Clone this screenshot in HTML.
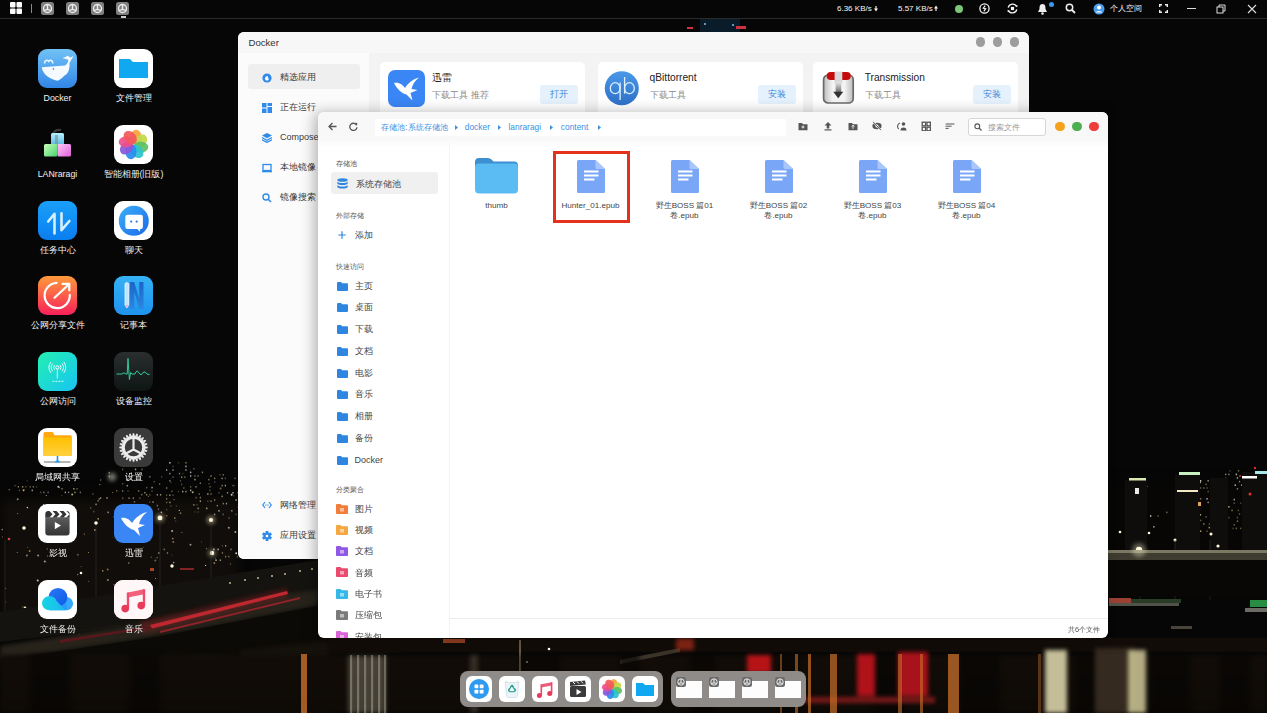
<!DOCTYPE html>
<html><head><meta charset="utf-8"><style>
*{margin:0;padding:0;box-sizing:border-box}
html,body{width:1267px;height:713px;overflow:hidden;background:#000;font-family:"Liberation Sans",sans-serif}
.abs{position:absolute}
svg{display:block}
#topbar{position:absolute;left:0;top:0;width:1267px;height:19px;background:rgba(6,6,6,0.92);border-bottom:1px solid #2a2a2a;color:#f6f6f6;font-size:8px}
.dicon{position:absolute;width:39px;height:39px;border-radius:9px;overflow:hidden}
.dicon svg{display:block}
.dlabel{position:absolute;width:100px;text-align:center;color:#f2f2f2;font-size:8.8px;line-height:10px;white-space:nowrap}
#docker{position:absolute;left:238px;top:32px;width:791px;height:527px;background:#f3f3f3;border-radius:6px;overflow:hidden}
#fm{position:absolute;left:318px;top:112px;width:790px;height:526px;background:#fff;border-radius:6px;overflow:hidden;box-shadow:-4px 0 14px rgba(0,0,0,0.28)}
.t{position:absolute;white-space:nowrap}

.dk-item{position:absolute;left:10px;width:112px;height:25px;font-size:9px;color:#3a3a3a;line-height:25px}
.dk-item .ic{position:absolute;left:14px;top:7.5px;width:10px;height:10px}
.dk-item .tx{position:absolute;left:32px;top:0}
.card{position:absolute;top:30px;width:205px;height:56px;background:#fff;border-radius:5px}
.card .nm{position:absolute;left:52px;top:10px;font-size:10.2px;color:#222;line-height:12px}
.card .sub{position:absolute;left:52px;top:28px;font-size:9px;color:#8a8a8a;line-height:11px}
.card .btn{position:absolute;left:160px;top:23px;width:38px;height:19px;background:#e5f1fc;border-radius:3px;color:#3a86d8;font-size:9px;line-height:19px;text-align:center}
.fm-sec{position:absolute;left:18px;font-size:7.3px;color:#555;line-height:9px}
.fm-it{position:absolute;left:18px;font-size:9px;color:#444;line-height:11px}
.fm-it .tx{position:absolute;left:18px;top:0;white-space:nowrap}
.fitem{position:absolute;width:80px;text-align:center;font-size:8.1px;color:#444;line-height:10px}
.tbi{position:absolute;top:121px}
</style></head><body>
<svg class="abs" style="left:0;top:0" width="1267" height="713" viewBox="0 0 1267 713"><defs><filter color-interpolation-filters="sRGB" id="b2" x="-20%" y="-20%" width="140%" height="140%"><feGaussianBlur color-interpolation-filters="sRGB" stdDeviation="2"/></filter><filter color-interpolation-filters="sRGB" id="b4" x="-20%" y="-20%" width="140%" height="140%"><feGaussianBlur color-interpolation-filters="sRGB" stdDeviation="5"/></filter><filter color-interpolation-filters="sRGB" id="b1" x="-50%" y="-50%" width="200%" height="200%"><feGaussianBlur color-interpolation-filters="sRGB" stdDeviation="0.7"/></filter><filter color-interpolation-filters="sRGB" id="b05" x="-50%" y="-50%" width="200%" height="200%"><feGaussianBlur color-interpolation-filters="sRGB" stdDeviation="0.4"/></filter><linearGradient id="river" x1="0" y1="0" x2="0" y2="1"><stop offset="0" stop-color="#120d08"/><stop offset="1" stop-color="#0e0a06"/></linearGradient></defs><rect width="1267" height="713" fill="#060606"/><g filter="url(#b4)"><rect x="0" y="490" width="240" height="130" fill="#080706"/><rect x="1108" y="480" width="159" height="80" fill="#070605"/></g><rect x="0" y="500" width="240" height="130" fill="#1a150f" opacity="0.45" filter="url(#b4)"/><g><circle cx="107.7" cy="569.6" r="1.0" fill="#f0b070" opacity="0.55"/><circle cx="139.8" cy="509.5" r="0.6" fill="#f0b070" opacity="0.35"/><circle cx="72.2" cy="494.5" r="1.0" fill="#e8dcaa" opacity="0.78"/><circle cx="155.6" cy="578.5" r="0.5" fill="#ffffff" opacity="0.72"/><circle cx="15.0" cy="485.7" r="0.5" fill="#ffffff" opacity="0.69"/><circle cx="77.7" cy="574.6" r="0.6" fill="#ffffff" opacity="0.62"/><circle cx="118.9" cy="586.0" r="0.8" fill="#f0b070" opacity="0.50"/><circle cx="131.2" cy="629.1" r="0.8" fill="#e8dcaa" opacity="0.46"/><circle cx="54.7" cy="526.2" r="0.5" fill="#e8dcaa" opacity="0.50"/><circle cx="201.5" cy="541.8" r="0.5" fill="#e8dcaa" opacity="0.41"/><circle cx="220.6" cy="488.4" r="1.0" fill="#f0b070" opacity="0.51"/><circle cx="134.8" cy="511.8" r="0.8" fill="#dcc88e" opacity="0.34"/><circle cx="79.2" cy="634.3" r="0.6" fill="#e8dcaa" opacity="0.42"/><circle cx="24.0" cy="489.6" r="0.6" fill="#f0b070" opacity="0.64"/><circle cx="44.8" cy="561.4" r="1.0" fill="#ffffff" opacity="0.62"/><circle cx="27.7" cy="547.3" r="0.5" fill="#ffffff" opacity="0.43"/><circle cx="231.1" cy="608.5" r="0.5" fill="#dcc88e" opacity="0.41"/><circle cx="93.8" cy="616.7" r="0.5" fill="#e8dcaa" opacity="0.79"/><circle cx="50.8" cy="521.3" r="0.8" fill="#dcc88e" opacity="0.49"/><circle cx="17.7" cy="513.4" r="0.5" fill="#ffffff" opacity="0.60"/><circle cx="88.5" cy="552.5" r="0.6" fill="#f0b070" opacity="0.73"/><circle cx="43.5" cy="504.7" r="0.6" fill="#ffffff" opacity="0.66"/><circle cx="37.7" cy="580.6" r="1.0" fill="#ffffff" opacity="0.74"/><circle cx="143.6" cy="547.4" r="0.5" fill="#e8dcaa" opacity="0.32"/><circle cx="229.1" cy="518.1" r="0.8" fill="#f0b070" opacity="0.51"/><circle cx="215.3" cy="558.6" r="0.5" fill="#ffffff" opacity="0.36"/><circle cx="114.1" cy="584.6" r="0.8" fill="#e8dcaa" opacity="0.41"/><circle cx="217.8" cy="599.8" r="0.8" fill="#e8dcaa" opacity="0.51"/><circle cx="59.3" cy="487.5" r="0.8" fill="#dcc88e" opacity="0.57"/><circle cx="231.6" cy="494.8" r="1.0" fill="#ffffff" opacity="0.79"/><circle cx="156.3" cy="590.6" r="0.5" fill="#ffffff" opacity="0.76"/><circle cx="113.0" cy="537.2" r="0.5" fill="#dcc88e" opacity="0.31"/><circle cx="151.4" cy="557.2" r="0.8" fill="#dcc88e" opacity="0.37"/><circle cx="17.2" cy="552.5" r="0.5" fill="#dcc88e" opacity="0.75"/><circle cx="175.4" cy="592.6" r="0.8" fill="#dcc88e" opacity="0.34"/><circle cx="112.6" cy="492.4" r="0.5" fill="#f0b070" opacity="0.73"/><circle cx="136.3" cy="580.0" r="1.0" fill="#f0b070" opacity="0.59"/><circle cx="144.9" cy="492.8" r="0.8" fill="#e8dcaa" opacity="0.74"/><circle cx="173.3" cy="542.1" r="1.0" fill="#f0b070" opacity="0.53"/><circle cx="128.8" cy="563.0" r="0.8" fill="#e8dcaa" opacity="0.60"/><circle cx="114.5" cy="516.8" r="1.0" fill="#e8dcaa" opacity="0.69"/><circle cx="157.1" cy="557.8" r="0.8" fill="#e8dcaa" opacity="0.45"/><circle cx="161.4" cy="512.4" r="0.8" fill="#ffffff" opacity="0.63"/><circle cx="105.2" cy="622.7" r="1.0" fill="#dcc88e" opacity="0.63"/><circle cx="47.2" cy="548.9" r="0.6" fill="#ffffff" opacity="0.49"/><circle cx="138.8" cy="530.6" r="0.6" fill="#ffffff" opacity="0.55"/><circle cx="199.2" cy="615.8" r="0.8" fill="#e8dcaa" opacity="0.71"/><circle cx="26.9" cy="555.4" r="1.0" fill="#ffffff" opacity="0.49"/><circle cx="123.8" cy="587.5" r="0.8" fill="#f0b070" opacity="0.34"/><circle cx="7.5" cy="619.7" r="0.8" fill="#e8dcaa" opacity="0.59"/><circle cx="73.5" cy="606.6" r="0.6" fill="#e8dcaa" opacity="0.50"/><circle cx="45.2" cy="603.1" r="0.6" fill="#dcc88e" opacity="0.69"/><circle cx="189.6" cy="637.4" r="1.0" fill="#e8dcaa" opacity="0.35"/><circle cx="127.4" cy="582.4" r="0.5" fill="#dcc88e" opacity="0.64"/><circle cx="47.4" cy="556.0" r="0.5" fill="#ffffff" opacity="0.68"/><circle cx="127.3" cy="485.8" r="0.8" fill="#ffffff" opacity="0.69"/><circle cx="128.4" cy="631.5" r="1.0" fill="#ffffff" opacity="0.72"/><circle cx="166.6" cy="515.8" r="1.0" fill="#f0b070" opacity="0.36"/><circle cx="107.9" cy="580.1" r="1.0" fill="#e8dcaa" opacity="0.58"/><circle cx="155.3" cy="560.4" r="1.0" fill="#dcc88e" opacity="0.46"/><circle cx="233.8" cy="495.8" r="0.6" fill="#e8dcaa" opacity="0.42"/><circle cx="92.9" cy="494.1" r="0.8" fill="#dcc88e" opacity="0.43"/><circle cx="170.9" cy="482.5" r="0.5" fill="#e8dcaa" opacity="0.52"/><circle cx="131.0" cy="602.9" r="0.5" fill="#f0b070" opacity="0.41"/><circle cx="206.5" cy="548.6" r="0.6" fill="#e8dcaa" opacity="0.57"/><circle cx="163.4" cy="626.6" r="0.6" fill="#f0b070" opacity="0.80"/><circle cx="214.3" cy="562.9" r="1.0" fill="#f0b070" opacity="0.59"/><circle cx="164.0" cy="601.3" r="0.8" fill="#f0b070" opacity="0.72"/><circle cx="133.6" cy="506.3" r="0.8" fill="#dcc88e" opacity="0.64"/><circle cx="227.2" cy="619.2" r="0.8" fill="#ffffff" opacity="0.73"/><circle cx="230.5" cy="563.9" r="0.6" fill="#f0b070" opacity="0.51"/><circle cx="27.2" cy="480.8" r="0.5" fill="#f0b070" opacity="0.57"/><circle cx="10.5" cy="626.8" r="1.0" fill="#e8dcaa" opacity="0.35"/><circle cx="39.7" cy="628.9" r="1.0" fill="#f0b070" opacity="0.76"/><circle cx="190.5" cy="544.7" r="1.0" fill="#ffffff" opacity="0.55"/><circle cx="80.8" cy="624.1" r="0.8" fill="#f0b070" opacity="0.35"/><circle cx="99.9" cy="484.7" r="0.6" fill="#dcc88e" opacity="0.65"/><circle cx="232.6" cy="485.7" r="0.6" fill="#ffffff" opacity="0.31"/><circle cx="67.6" cy="595.8" r="1.0" fill="#ffffff" opacity="0.35"/><circle cx="174.0" cy="499.6" r="0.6" fill="#dcc88e" opacity="0.65"/><circle cx="209.1" cy="483.7" r="0.6" fill="#f0b070" opacity="0.57"/><circle cx="205.6" cy="565.4" r="0.6" fill="#ffffff" opacity="0.73"/><circle cx="145.6" cy="617.1" r="0.8" fill="#ffffff" opacity="0.75"/><circle cx="75.2" cy="530.4" r="0.6" fill="#ffffff" opacity="0.69"/><circle cx="46.3" cy="495.5" r="0.6" fill="#ffffff" opacity="0.66"/><circle cx="61.8" cy="495.5" r="0.6" fill="#f0b070" opacity="0.40"/><circle cx="149.5" cy="607.8" r="0.6" fill="#e8dcaa" opacity="0.58"/><circle cx="85.1" cy="611.4" r="0.5" fill="#dcc88e" opacity="0.65"/><circle cx="151.0" cy="535.0" r="0.5" fill="#ffffff" opacity="0.54"/><circle cx="5.8" cy="601.9" r="0.6" fill="#f0b070" opacity="0.39"/><circle cx="27.4" cy="507.6" r="0.8" fill="#ffffff" opacity="0.76"/><circle cx="22.7" cy="489.9" r="0.5" fill="#f0b070" opacity="0.68"/><circle cx="77.8" cy="554.7" r="1.0" fill="#dcc88e" opacity="0.41"/><circle cx="88.8" cy="581.4" r="0.6" fill="#e8dcaa" opacity="0.39"/><circle cx="108.0" cy="598.3" r="0.6" fill="#f0b070" opacity="0.60"/><circle cx="22.6" cy="606.8" r="0.5" fill="#dcc88e" opacity="0.70"/><circle cx="167.7" cy="617.7" r="0.6" fill="#f0b070" opacity="0.55"/><circle cx="233.9" cy="608.8" r="0.8" fill="#dcc88e" opacity="0.76"/><circle cx="177.2" cy="604.5" r="0.6" fill="#f0b070" opacity="0.75"/><circle cx="209.4" cy="591.2" r="0.6" fill="#f0b070" opacity="0.50"/><circle cx="172.0" cy="491.3" r="0.8" fill="#dcc88e" opacity="0.53"/><circle cx="2.5" cy="536.9" r="0.6" fill="#e8dcaa" opacity="0.44"/><circle cx="228.8" cy="527.8" r="1.0" fill="#ffffff" opacity="0.58"/><circle cx="126.9" cy="542.3" r="0.6" fill="#f0b070" opacity="0.65"/><circle cx="181.3" cy="636.8" r="0.5" fill="#e8dcaa" opacity="0.61"/><circle cx="175.8" cy="521.1" r="0.5" fill="#f0b070" opacity="0.68"/><circle cx="154.2" cy="481.7" r="0.8" fill="#dcc88e" opacity="0.44"/><circle cx="81.1" cy="566.5" r="0.5" fill="#f0b070" opacity="0.62"/><circle cx="192.7" cy="492.2" r="1.0" fill="#e8dcaa" opacity="0.77"/><circle cx="38.1" cy="555.5" r="1.0" fill="#ffffff" opacity="0.57"/><circle cx="142.0" cy="548.7" r="1.0" fill="#f0b070" opacity="0.44"/><circle cx="94.9" cy="530.0" r="1.0" fill="#dcc88e" opacity="0.63"/><circle cx="133.4" cy="525.4" r="0.5" fill="#dcc88e" opacity="0.31"/><circle cx="58.3" cy="486.8" r="1.0" fill="#ffffff" opacity="0.68"/><circle cx="92.8" cy="623.6" r="0.5" fill="#f0b070" opacity="0.59"/><circle cx="172.1" cy="531.1" r="1.0" fill="#ffffff" opacity="0.66"/><circle cx="59.7" cy="600.9" r="0.5" fill="#e8dcaa" opacity="0.77"/><circle cx="172.0" cy="554.9" r="0.5" fill="#ffffff" opacity="0.33"/><circle cx="99.3" cy="498.9" r="0.8" fill="#e8dcaa" opacity="0.56"/><circle cx="29.6" cy="550.9" r="1.0" fill="#f0b070" opacity="0.60"/><circle cx="152.2" cy="589.1" r="0.6" fill="#dcc88e" opacity="0.78"/><circle cx="174.8" cy="518.1" r="0.8" fill="#e8dcaa" opacity="0.69"/><circle cx="148.7" cy="537.5" r="0.6" fill="#dcc88e" opacity="0.62"/><circle cx="179.3" cy="510.4" r="0.6" fill="#ffffff" opacity="0.74"/><circle cx="9.4" cy="489.7" r="0.8" fill="#dcc88e" opacity="0.51"/><circle cx="148.4" cy="496.4" r="0.5" fill="#dcc88e" opacity="0.68"/><circle cx="217.3" cy="505.7" r="0.8" fill="#ffffff" opacity="0.54"/><circle cx="84.3" cy="534.1" r="0.6" fill="#f0b070" opacity="0.72"/><circle cx="17.7" cy="499.2" r="1.0" fill="#ffffff" opacity="0.51"/><circle cx="61.4" cy="609.6" r="0.6" fill="#dcc88e" opacity="0.63"/><circle cx="235.4" cy="532.1" r="1.0" fill="#ffffff" opacity="0.63"/><circle cx="138.2" cy="553.9" r="0.5" fill="#dcc88e" opacity="0.57"/><circle cx="102.8" cy="570.9" r="0.8" fill="#f0b070" opacity="0.71"/><circle cx="2.2" cy="529.6" r="0.8" fill="#e8dcaa" opacity="0.55"/><circle cx="181.9" cy="532.5" r="0.6" fill="#ffffff" opacity="0.48"/><circle cx="172.8" cy="538.6" r="0.8" fill="#e8dcaa" opacity="0.65"/><circle cx="135.5" cy="627.0" r="1.0" fill="#dcc88e" opacity="0.57"/><circle cx="236.2" cy="553.3" r="1.0" fill="#ffffff" opacity="0.78"/><circle cx="173.7" cy="562.6" r="0.8" fill="#e8dcaa" opacity="0.71"/><circle cx="5.7" cy="588.3" r="0.6" fill="#f0b070" opacity="0.67"/></g><g filter="url(#b2)"><circle cx="112" cy="477" r="4" fill="#f0f0e0" opacity=".5"/><circle cx="160" cy="518" r="4" fill="#fff0c0" opacity=".5"/><circle cx="211" cy="520" r="4" fill="#fff0c0" opacity=".5"/><circle cx="212" cy="553" r="4" fill="#fff0c0" opacity=".4"/></g><g filter="url(#b05)"><rect x="108.6" y="472.0" width="1.3" height="1.6" fill="#b8a878" opacity="0.73"/><rect x="108.6" y="475.6" width="1.3" height="1.6" fill="#dcc88e" opacity="0.68"/><rect x="100.0" y="479.2" width="1.3" height="1.6" fill="#ffffff" opacity="0.30"/><rect x="116.1" y="490.0" width="1.3" height="1.6" fill="#b8a878" opacity="0.54"/><rect x="100.0" y="497.2" width="1.3" height="1.6" fill="#b8a878" opacity="0.75"/><rect x="106.4" y="497.2" width="1.3" height="1.6" fill="#ffffff" opacity="0.57"/><rect x="107.5" y="511.6" width="1.3" height="1.6" fill="#ffffff" opacity="0.60"/><rect x="115.0" y="511.6" width="1.3" height="1.6" fill="#ffffff" opacity="0.25"/><rect x="133.8" y="465.0" width="1.3" height="1.6" fill="#dcc88e" opacity="0.26"/><rect x="122.0" y="468.6" width="1.3" height="1.6" fill="#b8a878" opacity="0.54"/><rect x="134.9" y="468.6" width="1.3" height="1.6" fill="#dcc88e" opacity="0.80"/><rect x="141.3" y="468.6" width="1.3" height="1.6" fill="#b8a878" opacity="0.62"/><rect x="130.6" y="472.2" width="1.3" height="1.6" fill="#e8dcaa" opacity="0.50"/><rect x="140.2" y="472.2" width="1.3" height="1.6" fill="#b8a878" opacity="0.77"/><rect x="130.6" y="475.8" width="1.3" height="1.6" fill="#ffffff" opacity="0.46"/><rect x="127.4" y="479.4" width="1.3" height="1.6" fill="#ffffff" opacity="0.59"/><rect x="133.8" y="479.4" width="1.3" height="1.6" fill="#b8a878" opacity="0.27"/><rect x="122.0" y="483.0" width="1.3" height="1.6" fill="#e8dcaa" opacity="0.34"/><rect x="122.0" y="490.2" width="1.3" height="1.6" fill="#ffffff" opacity="0.44"/><rect x="127.4" y="490.2" width="1.3" height="1.6" fill="#b8a878" opacity="0.36"/><rect x="138.1" y="490.2" width="1.3" height="1.6" fill="#dcc88e" opacity="0.55"/><rect x="141.2" y="493.8" width="1.3" height="1.6" fill="#b8a878" opacity="0.63"/><rect x="122.0" y="497.4" width="1.3" height="1.6" fill="#dcc88e" opacity="0.40"/><rect x="128.4" y="497.4" width="1.3" height="1.6" fill="#e8dcaa" opacity="0.56"/><rect x="132.7" y="497.4" width="1.3" height="1.6" fill="#dcc88e" opacity="0.58"/><rect x="139.1" y="497.4" width="1.3" height="1.6" fill="#dcc88e" opacity="0.38"/><rect x="133.8" y="501.0" width="1.3" height="1.6" fill="#ffffff" opacity="0.42"/><rect x="122.0" y="504.6" width="1.3" height="1.6" fill="#b8a878" opacity="0.51"/><rect x="134.8" y="504.6" width="1.3" height="1.6" fill="#dcc88e" opacity="0.28"/><rect x="149.2" y="476.0" width="1.3" height="1.6" fill="#b8a878" opacity="0.65"/><rect x="161.0" y="476.0" width="1.3" height="1.6" fill="#b8a878" opacity="0.38"/><rect x="158.9" y="483.2" width="1.3" height="1.6" fill="#b8a878" opacity="0.56"/><rect x="146.0" y="486.8" width="1.3" height="1.6" fill="#ffffff" opacity="0.32"/><rect x="151.4" y="486.8" width="1.3" height="1.6" fill="#ffffff" opacity="0.65"/><rect x="151.4" y="490.4" width="1.3" height="1.6" fill="#ffffff" opacity="0.28"/><rect x="146.0" y="494.0" width="1.3" height="1.6" fill="#b8a878" opacity="0.73"/><rect x="149.2" y="494.0" width="1.3" height="1.6" fill="#e8dcaa" opacity="0.36"/><rect x="156.7" y="494.0" width="1.3" height="1.6" fill="#ffffff" opacity="0.54"/><rect x="159.9" y="494.0" width="1.3" height="1.6" fill="#e8dcaa" opacity="0.61"/><rect x="149.2" y="501.2" width="1.3" height="1.6" fill="#dcc88e" opacity="0.32"/><rect x="152.4" y="501.2" width="1.3" height="1.6" fill="#ffffff" opacity="0.53"/><rect x="156.7" y="504.8" width="1.3" height="1.6" fill="#e8dcaa" opacity="0.50"/><rect x="149.2" y="508.4" width="1.3" height="1.6" fill="#dcc88e" opacity="0.55"/><rect x="157.8" y="508.4" width="1.3" height="1.6" fill="#ffffff" opacity="0.39"/><rect x="169.2" y="462.0" width="1.3" height="1.6" fill="#ffffff" opacity="0.79"/><rect x="177.8" y="462.0" width="1.3" height="1.6" fill="#b8a878" opacity="0.28"/><rect x="185.3" y="462.0" width="1.3" height="1.6" fill="#b8a878" opacity="0.68"/><rect x="172.4" y="465.6" width="1.3" height="1.6" fill="#b8a878" opacity="0.38"/><rect x="185.3" y="465.6" width="1.3" height="1.6" fill="#ffffff" opacity="0.72"/><rect x="166.0" y="469.2" width="1.3" height="1.6" fill="#ffffff" opacity="0.58"/><rect x="172.4" y="469.2" width="1.3" height="1.6" fill="#e8dcaa" opacity="0.58"/><rect x="185.3" y="469.2" width="1.3" height="1.6" fill="#ffffff" opacity="0.56"/><rect x="169.2" y="472.8" width="1.3" height="1.6" fill="#e8dcaa" opacity="0.63"/><rect x="178.9" y="472.8" width="1.3" height="1.6" fill="#ffffff" opacity="0.46"/><rect x="182.1" y="472.8" width="1.3" height="1.6" fill="#b8a878" opacity="0.28"/><rect x="172.4" y="476.4" width="1.3" height="1.6" fill="#ffffff" opacity="0.33"/><rect x="181.0" y="476.4" width="1.3" height="1.6" fill="#b8a878" opacity="0.74"/><rect x="184.2" y="476.4" width="1.3" height="1.6" fill="#dcc88e" opacity="0.51"/><rect x="169.2" y="480.0" width="1.3" height="1.6" fill="#e8dcaa" opacity="0.55"/><rect x="179.9" y="480.0" width="1.3" height="1.6" fill="#ffffff" opacity="0.27"/><rect x="181.0" y="483.6" width="1.3" height="1.6" fill="#dcc88e" opacity="0.39"/><rect x="166.0" y="487.2" width="1.3" height="1.6" fill="#b8a878" opacity="0.67"/><rect x="183.2" y="487.2" width="1.3" height="1.6" fill="#dcc88e" opacity="0.45"/><rect x="177.8" y="490.8" width="1.3" height="1.6" fill="#dcc88e" opacity="0.28"/><rect x="182.1" y="490.8" width="1.3" height="1.6" fill="#ffffff" opacity="0.65"/><rect x="185.3" y="490.8" width="1.3" height="1.6" fill="#dcc88e" opacity="0.71"/><rect x="166.0" y="494.4" width="1.3" height="1.6" fill="#b8a878" opacity="0.43"/><rect x="169.2" y="494.4" width="1.3" height="1.6" fill="#ffffff" opacity="0.52"/><rect x="172.4" y="494.4" width="1.3" height="1.6" fill="#ffffff" opacity="0.27"/><rect x="166.0" y="498.0" width="1.3" height="1.6" fill="#b8a878" opacity="0.62"/><rect x="166.0" y="501.6" width="1.3" height="1.6" fill="#dcc88e" opacity="0.45"/><rect x="169.2" y="501.6" width="1.3" height="1.6" fill="#e8dcaa" opacity="0.66"/><rect x="170.3" y="505.2" width="1.3" height="1.6" fill="#dcc88e" opacity="0.30"/><rect x="175.7" y="505.2" width="1.3" height="1.6" fill="#b8a878" opacity="0.28"/><rect x="166.0" y="508.8" width="1.3" height="1.6" fill="#b8a878" opacity="0.36"/><rect x="179.9" y="512.4" width="1.3" height="1.6" fill="#b8a878" opacity="0.72"/><rect x="193.2" y="468.0" width="1.3" height="1.6" fill="#dcc88e" opacity="0.43"/><rect x="190.0" y="471.6" width="1.3" height="1.6" fill="#ffffff" opacity="0.67"/><rect x="201.8" y="471.6" width="1.3" height="1.6" fill="#b8a878" opacity="0.73"/><rect x="190.0" y="475.2" width="1.3" height="1.6" fill="#ffffff" opacity="0.63"/><rect x="194.3" y="475.2" width="1.3" height="1.6" fill="#dcc88e" opacity="0.51"/><rect x="197.5" y="475.2" width="1.3" height="1.6" fill="#ffffff" opacity="0.40"/><rect x="210.4" y="475.2" width="1.3" height="1.6" fill="#b8a878" opacity="0.72"/><rect x="194.3" y="478.8" width="1.3" height="1.6" fill="#e8dcaa" opacity="0.74"/><rect x="208.2" y="478.8" width="1.3" height="1.6" fill="#b8a878" opacity="0.69"/><rect x="199.7" y="482.4" width="1.3" height="1.6" fill="#ffffff" opacity="0.45"/><rect x="190.0" y="486.0" width="1.3" height="1.6" fill="#b8a878" opacity="0.53"/><rect x="195.4" y="486.0" width="1.3" height="1.6" fill="#b8a878" opacity="0.73"/><rect x="209.4" y="486.0" width="1.3" height="1.6" fill="#dcc88e" opacity="0.45"/><rect x="190.0" y="489.6" width="1.3" height="1.6" fill="#ffffff" opacity="0.71"/><rect x="209.3" y="489.6" width="1.3" height="1.6" fill="#dcc88e" opacity="0.38"/><rect x="198.6" y="493.2" width="1.3" height="1.6" fill="#dcc88e" opacity="0.48"/><rect x="207.2" y="493.2" width="1.3" height="1.6" fill="#e8dcaa" opacity="0.73"/><rect x="210.4" y="493.2" width="1.3" height="1.6" fill="#e8dcaa" opacity="0.47"/><rect x="195.4" y="496.8" width="1.3" height="1.6" fill="#e8dcaa" opacity="0.42"/><rect x="199.7" y="496.8" width="1.3" height="1.6" fill="#b8a878" opacity="0.67"/><rect x="199.7" y="500.4" width="1.3" height="1.6" fill="#dcc88e" opacity="0.74"/><rect x="207.2" y="500.4" width="1.3" height="1.6" fill="#b8a878" opacity="0.40"/><rect x="210.4" y="500.4" width="1.3" height="1.6" fill="#ffffff" opacity="0.45"/><rect x="193.2" y="504.0" width="1.3" height="1.6" fill="#dcc88e" opacity="0.62"/><rect x="196.4" y="504.0" width="1.3" height="1.6" fill="#b8a878" opacity="0.33"/><rect x="197.5" y="507.6" width="1.3" height="1.6" fill="#dcc88e" opacity="0.73"/><rect x="206.1" y="507.6" width="1.3" height="1.6" fill="#e8dcaa" opacity="0.77"/><rect x="194.3" y="511.2" width="1.3" height="1.6" fill="#b8a878" opacity="0.26"/><rect x="197.5" y="511.2" width="1.3" height="1.6" fill="#dcc88e" opacity="0.26"/><rect x="219.4" y="474.0" width="1.3" height="1.6" fill="#e8dcaa" opacity="0.26"/><rect x="222.6" y="474.0" width="1.3" height="1.6" fill="#b8a878" opacity="0.65"/><rect x="214.0" y="477.6" width="1.3" height="1.6" fill="#dcc88e" opacity="0.58"/><rect x="221.5" y="477.6" width="1.3" height="1.6" fill="#ffffff" opacity="0.55"/><rect x="224.7" y="477.6" width="1.3" height="1.6" fill="#e8dcaa" opacity="0.34"/><rect x="234.4" y="477.6" width="1.3" height="1.6" fill="#b8a878" opacity="0.53"/><rect x="214.0" y="481.2" width="1.3" height="1.6" fill="#ffffff" opacity="0.26"/><rect x="221.5" y="484.8" width="1.3" height="1.6" fill="#b8a878" opacity="0.75"/><rect x="224.7" y="484.8" width="1.3" height="1.6" fill="#dcc88e" opacity="0.74"/><rect x="233.3" y="484.8" width="1.3" height="1.6" fill="#b8a878" opacity="0.49"/><rect x="218.3" y="492.0" width="1.3" height="1.6" fill="#b8a878" opacity="0.43"/><rect x="226.9" y="492.0" width="1.3" height="1.6" fill="#b8a878" opacity="0.79"/><rect x="232.3" y="492.0" width="1.3" height="1.6" fill="#ffffff" opacity="0.66"/><rect x="237.7" y="492.0" width="1.3" height="1.6" fill="#ffffff" opacity="0.71"/><rect x="221.5" y="495.6" width="1.3" height="1.6" fill="#e8dcaa" opacity="0.64"/><rect x="214.0" y="499.2" width="1.3" height="1.6" fill="#b8a878" opacity="0.68"/><rect x="235.4" y="499.2" width="1.3" height="1.6" fill="#e8dcaa" opacity="0.76"/><rect x="222.6" y="502.8" width="1.3" height="1.6" fill="#b8a878" opacity="0.75"/><rect x="225.8" y="502.8" width="1.3" height="1.6" fill="#ffffff" opacity="0.54"/><rect x="237.6" y="506.4" width="1.3" height="1.6" fill="#dcc88e" opacity="0.31"/><rect x="218.3" y="510.0" width="1.3" height="1.6" fill="#e8dcaa" opacity="0.80"/><rect x="231.2" y="510.0" width="1.3" height="1.6" fill="#e8dcaa" opacity="0.60"/><rect x="214.0" y="513.6" width="1.3" height="1.6" fill="#ffffff" opacity="0.53"/><rect x="222.6" y="513.6" width="1.3" height="1.6" fill="#e8dcaa" opacity="0.41"/><rect x="235.5" y="513.6" width="1.3" height="1.6" fill="#b8a878" opacity="0.46"/><rect x="17.7" y="486.0" width="1.3" height="1.6" fill="#dcc88e" opacity="0.57"/><rect x="22.0" y="486.0" width="1.3" height="1.6" fill="#e8dcaa" opacity="0.62"/><rect x="25.2" y="486.0" width="1.3" height="1.6" fill="#dcc88e" opacity="0.32"/><rect x="29.5" y="486.0" width="1.3" height="1.6" fill="#dcc88e" opacity="0.44"/><rect x="32.7" y="486.0" width="1.3" height="1.6" fill="#e8dcaa" opacity="0.50"/><rect x="35.9" y="486.0" width="1.3" height="1.6" fill="#dcc88e" opacity="0.26"/><rect x="18.7" y="489.6" width="1.3" height="1.6" fill="#dcc88e" opacity="0.34"/><rect x="23.0" y="489.6" width="1.3" height="1.6" fill="#e8dcaa" opacity="0.78"/><rect x="31.6" y="489.6" width="1.3" height="1.6" fill="#ffffff" opacity="0.61"/><rect x="61.4" y="488.0" width="1.3" height="1.6" fill="#dcc88e" opacity="0.61"/><rect x="73.2" y="488.0" width="1.3" height="1.6" fill="#dcc88e" opacity="0.77"/><rect x="76.4" y="488.0" width="1.3" height="1.6" fill="#b8a878" opacity="0.54"/><rect x="40.0" y="491.6" width="1.3" height="1.6" fill="#e8dcaa" opacity="0.29"/><rect x="43.2" y="491.6" width="1.3" height="1.6" fill="#e8dcaa" opacity="0.53"/><rect x="47.5" y="491.6" width="1.3" height="1.6" fill="#ffffff" opacity="0.39"/><rect x="64.7" y="491.6" width="1.3" height="1.6" fill="#e8dcaa" opacity="0.70"/><rect x="67.9" y="491.6" width="1.3" height="1.6" fill="#ffffff" opacity="0.47"/><rect x="74.3" y="491.6" width="1.3" height="1.6" fill="#e8dcaa" opacity="0.65"/><rect x="79.7" y="491.6" width="1.3" height="1.6" fill="#e8dcaa" opacity="0.47"/><rect x="97.5" y="500.0" width="1.3" height="1.6" fill="#dcc88e" opacity="0.55"/><rect x="95.4" y="503.6" width="1.3" height="1.6" fill="#ffffff" opacity="0.56"/><rect x="90.0" y="507.2" width="1.3" height="1.6" fill="#dcc88e" opacity="0.37"/><rect x="93.2" y="510.8" width="1.3" height="1.6" fill="#e8dcaa" opacity="0.34"/><rect x="97.5" y="518.0" width="1.3" height="1.6" fill="#dcc88e" opacity="0.78"/><rect x="221.8" y="545.0" width="1.3" height="1.6" fill="#dcc88e" opacity="0.28"/><rect x="225.0" y="545.0" width="1.3" height="1.6" fill="#dcc88e" opacity="0.69"/><rect x="213.2" y="548.6" width="1.3" height="1.6" fill="#ffffff" opacity="0.71"/><rect x="217.5" y="548.6" width="1.3" height="1.6" fill="#ffffff" opacity="0.70"/><rect x="230.4" y="548.6" width="1.3" height="1.6" fill="#e8dcaa" opacity="0.55"/><rect x="221.8" y="552.2" width="1.3" height="1.6" fill="#e8dcaa" opacity="0.49"/><rect x="225.0" y="555.8" width="1.3" height="1.6" fill="#dcc88e" opacity="0.54"/><rect x="228.2" y="555.8" width="1.3" height="1.6" fill="#dcc88e" opacity="0.51"/><rect x="236.8" y="555.8" width="1.3" height="1.6" fill="#b8a878" opacity="0.52"/><rect x="215.4" y="559.4" width="1.3" height="1.6" fill="#ffffff" opacity="0.68"/><rect x="219.7" y="559.4" width="1.3" height="1.6" fill="#dcc88e" opacity="0.70"/><rect x="163.6" y="548.6" width="1.3" height="1.6" fill="#dcc88e" opacity="0.56"/><rect x="158.2" y="552.2" width="1.3" height="1.6" fill="#ffffff" opacity="0.57"/><rect x="166.8" y="552.2" width="1.3" height="1.6" fill="#dcc88e" opacity="0.58"/><rect x="140.0" y="555.8" width="1.3" height="1.6" fill="#dcc88e" opacity="0.26"/><rect x="1146.4" y="485.6" width="1.3" height="1.6" fill="#e8dcaa" opacity="0.36"/><rect x="1128.2" y="489.2" width="1.3" height="1.6" fill="#e8dcaa" opacity="0.33"/><rect x="1140.0" y="489.2" width="1.3" height="1.6" fill="#dcc88e" opacity="0.59"/><rect x="1130.4" y="492.8" width="1.3" height="1.6" fill="#e8dcaa" opacity="0.32"/><rect x="1138.9" y="496.4" width="1.3" height="1.6" fill="#dcc88e" opacity="0.73"/><rect x="1125.0" y="500.0" width="1.3" height="1.6" fill="#e8dcaa" opacity="0.78"/><rect x="1141.1" y="500.0" width="1.3" height="1.6" fill="#ffffff" opacity="0.39"/><rect x="1140.0" y="507.2" width="1.3" height="1.6" fill="#dcc88e" opacity="0.66"/><rect x="1138.9" y="510.8" width="1.3" height="1.6" fill="#e8dcaa" opacity="0.79"/><rect x="1142.1" y="514.4" width="1.3" height="1.6" fill="#e8dcaa" opacity="0.46"/><rect x="1128.2" y="528.8" width="1.3" height="1.6" fill="#dcc88e" opacity="0.79"/><rect x="1166.2" y="511.6" width="1.3" height="1.6" fill="#dcc88e" opacity="0.52"/><rect x="1150.0" y="515.2" width="1.3" height="1.6" fill="#ffffff" opacity="0.78"/><rect x="1157.5" y="515.2" width="1.3" height="1.6" fill="#e8dcaa" opacity="0.38"/><rect x="1153.2" y="526.0" width="1.3" height="1.6" fill="#e8dcaa" opacity="0.78"/><rect x="1179.3" y="478.0" width="1.3" height="1.6" fill="#ffffff" opacity="0.52"/><rect x="1199.7" y="481.6" width="1.3" height="1.6" fill="#e8dcaa" opacity="0.72"/><rect x="1191.1" y="485.2" width="1.3" height="1.6" fill="#dcc88e" opacity="0.41"/><rect x="1175.0" y="488.8" width="1.3" height="1.6" fill="#b8a878" opacity="0.51"/><rect x="1187.9" y="492.4" width="1.3" height="1.6" fill="#e8dcaa" opacity="0.77"/><rect x="1192.2" y="496.0" width="1.3" height="1.6" fill="#ffffff" opacity="0.38"/><rect x="1175.0" y="499.6" width="1.3" height="1.6" fill="#b8a878" opacity="0.65"/><rect x="1175.0" y="514.0" width="1.3" height="1.6" fill="#b8a878" opacity="0.44"/><rect x="1199.8" y="514.0" width="1.3" height="1.6" fill="#e8dcaa" opacity="0.70"/><rect x="1175.0" y="517.6" width="1.3" height="1.6" fill="#dcc88e" opacity="0.66"/><rect x="1189.0" y="517.6" width="1.3" height="1.6" fill="#dcc88e" opacity="0.70"/><rect x="1182.5" y="524.8" width="1.3" height="1.6" fill="#dcc88e" opacity="0.55"/><rect x="1193.2" y="524.8" width="1.3" height="1.6" fill="#e8dcaa" opacity="0.55"/><rect x="1181.4" y="528.4" width="1.3" height="1.6" fill="#e8dcaa" opacity="0.60"/><rect x="1188.9" y="528.4" width="1.3" height="1.6" fill="#e8dcaa" opacity="0.63"/><rect x="1186.8" y="532.0" width="1.3" height="1.6" fill="#dcc88e" opacity="0.59"/><rect x="1198.6" y="532.0" width="1.3" height="1.6" fill="#dcc88e" opacity="0.68"/><rect x="1200.0" y="480.0" width="1.3" height="1.6" fill="#ffffff" opacity="0.75"/><rect x="1207.5" y="480.0" width="1.3" height="1.6" fill="#dcc88e" opacity="0.73"/><rect x="1213.9" y="480.0" width="1.3" height="1.6" fill="#e8dcaa" opacity="0.72"/><rect x="1220.3" y="480.0" width="1.3" height="1.6" fill="#e8dcaa" opacity="0.58"/><rect x="1205.4" y="483.6" width="1.3" height="1.6" fill="#e8dcaa" opacity="0.48"/><rect x="1216.1" y="483.6" width="1.3" height="1.6" fill="#dcc88e" opacity="0.37"/><rect x="1200.0" y="487.2" width="1.3" height="1.6" fill="#dcc88e" opacity="0.41"/><rect x="1203.2" y="487.2" width="1.3" height="1.6" fill="#dcc88e" opacity="0.48"/><rect x="1206.4" y="487.2" width="1.3" height="1.6" fill="#e8dcaa" opacity="0.34"/><rect x="1207.5" y="490.8" width="1.3" height="1.6" fill="#dcc88e" opacity="0.42"/><rect x="1210.8" y="494.4" width="1.3" height="1.6" fill="#ffffff" opacity="0.73"/><rect x="1214.0" y="494.4" width="1.3" height="1.6" fill="#ffffff" opacity="0.54"/><rect x="1200.0" y="498.0" width="1.3" height="1.6" fill="#dcc88e" opacity="0.53"/><rect x="1206.4" y="498.0" width="1.3" height="1.6" fill="#ffffff" opacity="0.69"/><rect x="1221.4" y="498.0" width="1.3" height="1.6" fill="#ffffff" opacity="0.62"/><rect x="1207.5" y="501.6" width="1.3" height="1.6" fill="#ffffff" opacity="0.58"/><rect x="1215.0" y="501.6" width="1.3" height="1.6" fill="#e8dcaa" opacity="0.79"/><rect x="1218.2" y="501.6" width="1.3" height="1.6" fill="#ffffff" opacity="0.67"/><rect x="1215.0" y="508.8" width="1.3" height="1.6" fill="#dcc88e" opacity="0.40"/><rect x="1221.4" y="508.8" width="1.3" height="1.6" fill="#ffffff" opacity="0.46"/><rect x="1218.3" y="512.4" width="1.3" height="1.6" fill="#dcc88e" opacity="0.28"/><rect x="1205.4" y="516.0" width="1.3" height="1.6" fill="#ffffff" opacity="0.36"/><rect x="1200.0" y="519.6" width="1.3" height="1.6" fill="#b8a878" opacity="0.51"/><rect x="1215.0" y="519.6" width="1.3" height="1.6" fill="#ffffff" opacity="0.59"/><rect x="1218.2" y="519.6" width="1.3" height="1.6" fill="#b8a878" opacity="0.33"/><rect x="1221.4" y="519.6" width="1.3" height="1.6" fill="#dcc88e" opacity="0.58"/><rect x="1203.2" y="523.2" width="1.3" height="1.6" fill="#ffffff" opacity="0.50"/><rect x="1208.6" y="523.2" width="1.3" height="1.6" fill="#ffffff" opacity="0.29"/><rect x="1208.6" y="526.8" width="1.3" height="1.6" fill="#dcc88e" opacity="0.76"/><rect x="1219.4" y="526.8" width="1.3" height="1.6" fill="#dcc88e" opacity="0.77"/><rect x="1200.0" y="530.4" width="1.3" height="1.6" fill="#dcc88e" opacity="0.76"/><rect x="1206.4" y="530.4" width="1.3" height="1.6" fill="#dcc88e" opacity="0.41"/><rect x="1217.2" y="534.0" width="1.3" height="1.6" fill="#b8a878" opacity="0.56"/><rect x="1229.3" y="470.0" width="1.3" height="1.6" fill="#b8a878" opacity="0.36"/><rect x="1237.9" y="470.0" width="1.3" height="1.6" fill="#dcc88e" opacity="0.53"/><rect x="1225.0" y="473.6" width="1.3" height="1.6" fill="#dcc88e" opacity="0.65"/><rect x="1228.2" y="473.6" width="1.3" height="1.6" fill="#e8dcaa" opacity="0.59"/><rect x="1235.7" y="473.6" width="1.3" height="1.6" fill="#ffffff" opacity="0.69"/><rect x="1225.0" y="477.2" width="1.3" height="1.6" fill="#b8a878" opacity="0.38"/><rect x="1236.8" y="477.2" width="1.3" height="1.6" fill="#ffffff" opacity="0.63"/><rect x="1238.9" y="480.8" width="1.3" height="1.6" fill="#dcc88e" opacity="0.63"/><rect x="1234.6" y="484.4" width="1.3" height="1.6" fill="#ffffff" opacity="0.72"/><rect x="1241.0" y="484.4" width="1.3" height="1.6" fill="#dcc88e" opacity="0.76"/><rect x="1236.8" y="488.0" width="1.3" height="1.6" fill="#dcc88e" opacity="0.60"/><rect x="1242.2" y="488.0" width="1.3" height="1.6" fill="#b8a878" opacity="0.51"/><rect x="1243.2" y="491.6" width="1.3" height="1.6" fill="#b8a878" opacity="0.69"/><rect x="1233.6" y="498.8" width="1.3" height="1.6" fill="#ffffff" opacity="0.67"/><rect x="1233.6" y="502.4" width="1.3" height="1.6" fill="#ffffff" opacity="0.32"/><rect x="1240.0" y="502.4" width="1.3" height="1.6" fill="#b8a878" opacity="0.35"/><rect x="1243.2" y="502.4" width="1.3" height="1.6" fill="#e8dcaa" opacity="0.43"/><rect x="1228.2" y="506.0" width="1.3" height="1.6" fill="#e8dcaa" opacity="0.79"/><rect x="1243.2" y="506.0" width="1.3" height="1.6" fill="#b8a878" opacity="0.36"/><rect x="1231.4" y="509.6" width="1.3" height="1.6" fill="#b8a878" opacity="0.75"/><rect x="1237.8" y="509.6" width="1.3" height="1.6" fill="#dcc88e" opacity="0.39"/><rect x="1238.9" y="513.2" width="1.3" height="1.6" fill="#b8a878" opacity="0.52"/><rect x="1225.0" y="516.8" width="1.3" height="1.6" fill="#ffffff" opacity="0.79"/><rect x="1228.2" y="516.8" width="1.3" height="1.6" fill="#b8a878" opacity="0.47"/><rect x="1236.8" y="516.8" width="1.3" height="1.6" fill="#dcc88e" opacity="0.44"/><rect x="1236.8" y="520.4" width="1.3" height="1.6" fill="#dcc88e" opacity="0.56"/><rect x="1233.6" y="524.0" width="1.3" height="1.6" fill="#e8dcaa" opacity="0.44"/><rect x="1225.0" y="527.6" width="1.3" height="1.6" fill="#b8a878" opacity="0.27"/><rect x="1232.5" y="527.6" width="1.3" height="1.6" fill="#e8dcaa" opacity="0.30"/><rect x="1235.7" y="527.6" width="1.3" height="1.6" fill="#b8a878" opacity="0.58"/><rect x="1240.0" y="527.6" width="1.3" height="1.6" fill="#b8a878" opacity="0.49"/><rect x="1248.2" y="475.0" width="1.3" height="1.6" fill="#e8dcaa" opacity="0.35"/><rect x="1257.8" y="475.0" width="1.3" height="1.6" fill="#dcc88e" opacity="0.57"/><rect x="1250.4" y="478.6" width="1.3" height="1.6" fill="#dcc88e" opacity="0.62"/><rect x="1264.4" y="478.6" width="1.3" height="1.6" fill="#ffffff" opacity="0.66"/><rect x="1249.3" y="482.2" width="1.3" height="1.6" fill="#ffffff" opacity="0.51"/><rect x="1257.9" y="482.2" width="1.3" height="1.6" fill="#dcc88e" opacity="0.69"/><rect x="1266.5" y="482.2" width="1.3" height="1.6" fill="#ffffff" opacity="0.29"/><rect x="1254.6" y="485.8" width="1.3" height="1.6" fill="#b8a878" opacity="0.31"/><rect x="1263.2" y="485.8" width="1.3" height="1.6" fill="#ffffff" opacity="0.71"/><rect x="1255.8" y="489.4" width="1.3" height="1.6" fill="#b8a878" opacity="0.77"/><rect x="1263.3" y="489.4" width="1.3" height="1.6" fill="#ffffff" opacity="0.75"/><rect x="1249.3" y="493.0" width="1.3" height="1.6" fill="#dcc88e" opacity="0.61"/><rect x="1259.0" y="493.0" width="1.3" height="1.6" fill="#dcc88e" opacity="0.69"/><rect x="1266.5" y="493.0" width="1.3" height="1.6" fill="#b8a878" opacity="0.56"/><rect x="1256.8" y="496.6" width="1.3" height="1.6" fill="#ffffff" opacity="0.45"/><rect x="1248.2" y="500.2" width="1.3" height="1.6" fill="#e8dcaa" opacity="0.49"/><rect x="1251.4" y="500.2" width="1.3" height="1.6" fill="#e8dcaa" opacity="0.36"/><rect x="1264.3" y="500.2" width="1.3" height="1.6" fill="#b8a878" opacity="0.45"/><rect x="1245.0" y="503.8" width="1.3" height="1.6" fill="#dcc88e" opacity="0.76"/><rect x="1255.7" y="503.8" width="1.3" height="1.6" fill="#dcc88e" opacity="0.36"/><rect x="1258.9" y="503.8" width="1.3" height="1.6" fill="#dcc88e" opacity="0.75"/><rect x="1266.4" y="503.8" width="1.3" height="1.6" fill="#b8a878" opacity="0.73"/><rect x="1245.0" y="507.4" width="1.3" height="1.6" fill="#dcc88e" opacity="0.75"/><rect x="1259.0" y="507.4" width="1.3" height="1.6" fill="#ffffff" opacity="0.47"/><rect x="1245.0" y="511.0" width="1.3" height="1.6" fill="#e8dcaa" opacity="0.42"/><rect x="1250.4" y="514.6" width="1.3" height="1.6" fill="#e8dcaa" opacity="0.25"/><rect x="1254.7" y="514.6" width="1.3" height="1.6" fill="#ffffff" opacity="0.27"/><rect x="1248.2" y="518.2" width="1.3" height="1.6" fill="#e8dcaa" opacity="0.47"/><rect x="1253.6" y="518.2" width="1.3" height="1.6" fill="#b8a878" opacity="0.66"/><rect x="1262.1" y="521.8" width="1.3" height="1.6" fill="#b8a878" opacity="0.31"/><rect x="1245.0" y="525.4" width="1.3" height="1.6" fill="#ffffff" opacity="0.74"/><rect x="1266.5" y="525.4" width="1.3" height="1.6" fill="#b8a878" opacity="0.39"/><rect x="1245.0" y="529.0" width="1.3" height="1.6" fill="#b8a878" opacity="0.76"/><rect x="1251.4" y="529.0" width="1.3" height="1.6" fill="#e8dcaa" opacity="0.35"/></g><g><rect x="1125" y="480" width="22" height="80" fill="#0e0d0b"/><rect x="1175" y="474" width="25" height="86" fill="#0e0d0b"/><rect x="1178" y="490" width="22" height="70" fill="#0e0d0b"/><rect x="1210" y="478" width="18" height="82" fill="#0e0d0b"/><rect x="1242" y="472" width="25" height="88" fill="#0e0d0b"/></g><g filter="url(#b05)"><rect x="1129" y="478" width="17" height="2.5" fill="#d8e8b0"/><rect x="1179" y="472" width="21" height="3" fill="#c8f0c0"/><rect x="1177" y="490" width="21" height="2" fill="#f0e8c0"/><rect x="1242" y="476" width="15" height="2.5" fill="#ffffff"/><rect x="1255" y="471" width="12" height="3" fill="#a8e8e8"/><rect x="1135" y="488" width="4" height="6" fill="#e8e8e8"/><rect x="1198" y="502" width="3" height="4" fill="#e0a060"/><circle cx="1250" cy="494" r="1.5" fill="#e03030"/></g><circle cx="160" cy="518" r="2.4" fill="#fff8e0" filter="url(#b1)"/><circle cx="211" cy="520" r="2" fill="#fff8e0" filter="url(#b1)"/><circle cx="212" cy="553" r="2.2" fill="#fff8e0" filter="url(#b1)"/><circle cx="172" cy="566" r="1.7" fill="#fff8e0" filter="url(#b1)"/><circle cx="24" cy="528" r="1.8" fill="#fff8e0" filter="url(#b1)"/><circle cx="96" cy="523" r="1.8" fill="#fff8e0" filter="url(#b1)"/><circle cx="25" cy="608" r="1.4" fill="#fff8e0" filter="url(#b1)"/><circle cx="81" cy="573" r="1.3" fill="#fff8e0" filter="url(#b1)"/><circle cx="1139" cy="550" r="3.2" fill="#fff8e0" filter="url(#b1)"/><circle cx="1120" cy="532" r="1.3" fill="#fff8e0" filter="url(#b1)"/><circle cx="1149" cy="533" r="1.3" fill="#fff8e0" filter="url(#b1)"/><circle cx="1175" cy="540" r="1.5" fill="#fff8e0" filter="url(#b1)"/><circle cx="1211" cy="534" r="1.5" fill="#fff8e0" filter="url(#b1)"/><circle cx="1218" cy="546" r="1.6" fill="#fff8e0" filter="url(#b1)"/><circle cx="1227" cy="553" r="1.4" fill="#fff8e0" filter="url(#b1)"/><rect x="159.6" y="520" width="0.8" height="80" fill="#3a3530" opacity="0.7"/><rect x="210.6" y="522" width="0.8" height="68" fill="#3a3530" opacity="0.7"/><rect x="95.6" y="525" width="0.8" height="85" fill="#3a3530" opacity="0.7"/><rect x="4.6" y="540" width="0.8" height="100" fill="#3a3530" opacity="0.7"/><rect x="1139.6" y="553" width="0.8" height="47" fill="#3a3530" opacity="0.7"/><rect x="1174.6" y="540" width="0.8" height="60" fill="#3a3530" opacity="0.7"/><rect x="1209.6" y="540" width="0.8" height="60" fill="#3a3530" opacity="0.7"/><circle cx="9" cy="539" r="1.3" fill="#e04040"/><rect x="150" y="568" width="4" height="3" fill="#d05030" opacity=".8"/><rect x="180" y="568" width="14" height="2" fill="#a02828" opacity="0.8"/><circle cx="1255" cy="468" r="1.2" fill="#d03030"/><circle cx="1240" cy="476" r="1" fill="#d03030"/><polygon points="0,612 318,560 470,540 470,575 318,602 0,642" fill="#15130f" filter="url(#b1)"/><polygon points="0,646 150,622 288,594 318,590 318,606 150,638 0,660" fill="#27231b" filter="url(#b2)"/><polygon points="0,660 150,638 318,606 470,580 470,650 0,668" fill="#0c0a07"/><g filter="url(#b05)"><circle cx="245" cy="580" r="1" fill="#f0e0b0" opacity=".8"/><circle cx="258" cy="578" r="1" fill="#f0e0b0" opacity=".8"/><circle cx="272" cy="576" r="1" fill="#f0e0b0" opacity=".8"/><circle cx="285" cy="574" r="1" fill="#f0e0b0" opacity=".8"/><circle cx="300" cy="571" r="1" fill="#f0e0b0" opacity=".8"/><circle cx="312" cy="569" r="1" fill="#f0e0b0" opacity=".8"/><circle cx="230" cy="583" r="1" fill="#f0e0b0" opacity=".8"/></g><polygon points="240,650 330,640 330,713 240,713" fill="#1a140e" opacity="0.7" filter="url(#b2)"/><polygon points="40,690 200,655 230,657 60,700" fill="#2a2824" opacity="0.5" filter="url(#b2)"/><g filter="url(#b05)"><polygon points="150,625 287,591 288,594 152,628.5" fill="#d02c34"/><polygon points="140,622 287,588 288,598 142,634" fill="#a02028" opacity=".35" filter="url(#b2)"/><polygon points="160,631 300,597 300,599 160,633" fill="#90222a"/><polygon points="60,640 150,626 151,628 60,643" fill="#5a181c"/></g><rect x="0" y="655" width="1267" height="58" fill="url(#river)" filter="url(#b2)"/><rect x="330" y="638" width="937" height="14" fill="#110c08"/><g filter="url(#b2)"><rect x="348" y="656" width="38" height="57" fill="#a8a490" opacity=".35"/></g><g filter="url(#b05)"><rect x="350" y="655" width="2.2" height="58" fill="#d8d4c0" opacity="0.35"/><rect x="357" y="655" width="2.2" height="58" fill="#d8d4c0" opacity="0.35"/><rect x="364" y="655" width="2.2" height="58" fill="#d8d4c0" opacity="0.35"/><rect x="371" y="655" width="2.2" height="58" fill="#d8d4c0" opacity="0.35"/><rect x="378" y="655" width="2.2" height="58" fill="#d8d4c0" opacity="0.35"/><rect x="384" y="655" width="2.2" height="58" fill="#d8d4c0" opacity="0.35"/><rect x="443" y="639" width="22" height="4" fill="#b04a2a" opacity=".8"/><rect x="519" y="640" width="2" height="33" fill="#8a7a60" opacity=".7"/><circle cx="549" cy="649" r="1.3" fill="#fff"/><circle cx="527" cy="662" r="1.1" fill="#fff"/><polygon points="620,660 680,648 680,652 620,664" fill="#5a5040" opacity=".6"/></g><rect x="30" y="655" width="40" height="58" fill="#060504" opacity="0.6" filter="url(#b2)"/><rect x="130" y="655" width="30" height="58" fill="#060504" opacity="0.6" filter="url(#b2)"/><rect x="520" y="655" width="40" height="58" fill="#060504" opacity="0.6" filter="url(#b2)"/><rect x="620" y="655" width="20" height="58" fill="#060504" opacity="0.6" filter="url(#b2)"/><rect x="690" y="655" width="25" height="58" fill="#060504" opacity="0.6" filter="url(#b2)"/><rect x="778" y="655" width="22" height="58" fill="#060504" opacity="0.6" filter="url(#b2)"/><rect x="875" y="655" width="30" height="58" fill="#060504" opacity="0.6" filter="url(#b2)"/><rect x="960" y="655" width="40" height="58" fill="#060504" opacity="0.6" filter="url(#b2)"/><rect x="1075" y="655" width="20" height="58" fill="#060504" opacity="0.6" filter="url(#b2)"/><rect x="1150" y="655" width="40" height="58" fill="#060504" opacity="0.6" filter="url(#b2)"/><rect x="1220" y="655" width="30" height="58" fill="#060504" opacity="0.6" filter="url(#b2)"/><g filter="url(#b2)"><rect x="747" y="655" width="24" height="18" fill="#c01418" opacity="0.95"/><rect x="676" y="638" width="18" height="12" fill="#a02a18" opacity="0.8"/><rect x="857" y="654" width="18" height="42" fill="#b0121a"/><rect x="898" y="652" width="30" height="44" fill="#a8121a"/><rect x="805" y="697" width="130" height="6" fill="#7a1a1a"/></g><rect x="808" y="654" width="3" height="59" fill="#c8702a" opacity="0.7" filter="url(#b1)"/><rect x="830" y="654" width="7" height="59" fill="#c8702a" opacity="0.7" filter="url(#b1)"/><rect x="898" y="654" width="4" height="59" fill="#c8702a" opacity="0.6" filter="url(#b1)"/><rect x="920" y="654" width="3" height="59" fill="#c8702a" opacity="0.6" filter="url(#b1)"/><rect x="948" y="654" width="11" height="59" fill="#c8702a" opacity="0.75" filter="url(#b1)"/><rect x="780" y="654" width="2" height="59" fill="#c8702a" opacity="0.5" filter="url(#b1)"/><rect x="795" y="654" width="3" height="59" fill="#c8702a" opacity="0.6" filter="url(#b1)"/><rect x="301" y="654" width="6" height="59" fill="#c8702a" opacity="0.8" filter="url(#b1)"/><rect x="1038" y="654" width="3" height="59" fill="#c8702a" opacity="0.4" filter="url(#b1)"/><g filter="url(#b2)"><rect x="1045" y="650" width="22" height="63" fill="#d8d2a8" opacity="0.9"/><rect x="1095" y="648" width="40" height="65" fill="#3a2e22" opacity="0.9"/><rect x="1128" y="650" width="18" height="63" fill="#d0c898" opacity="0.85"/><rect x="470" y="655" width="8" height="58" fill="#6a6050" opacity="0.4"/></g><rect x="1108" y="550" width="159" height="10" fill="#3e3c30" filter="url(#b05)"/><rect x="1108" y="550" width="159" height="3" fill="#7a7862" filter="url(#b05)"/><circle cx="1139" cy="550" r="7" fill="#fff8d0" opacity="0.35" filter="url(#b2)"/><rect x="1108" y="560" width="159" height="36" fill="#090706"/><g filter="url(#b05)"><rect x="1109" y="598" width="22" height="5" fill="#c05040" opacity="0.8"/><rect x="1109" y="603" width="70" height="3" fill="#b0b0a0" opacity="0.45"/><rect x="1131" y="599" width="50" height="4" fill="#406040" opacity="0.6"/><rect x="1250" y="600" width="17" height="7" fill="#30b050" opacity="0.8"/><rect x="1245" y="608" width="22" height="4" fill="#d0d0c0" opacity="0.5"/><rect x="1171" y="626" width="21" height="3" fill="#5a5448" opacity="0.8"/></g><g filter="url(#b1)"><rect x="700" y="19" width="40" height="13" fill="#0a1c2a"/><rect x="687" y="27" width="6" height="2" fill="#d03040"/><rect x="736" y="26" width="10" height="3" fill="#d03040"/><circle cx="705" cy="24" r="1" fill="#7ac0f0"/><circle cx="733" cy="25" r="1" fill="#7ac0f0"/></g></svg>
<div id="topbar"><svg class="abs" style="left:10px;top:2px" width="12" height="12" viewBox="0 0 12 12"><rect x="0" y="0" width="5.5" height="5.5" rx="1" fill="#fff"/><rect x="6.5" y="0" width="5.5" height="5.5" rx="1" fill="#fff"/><rect x="0" y="6.5" width="5.5" height="5.5" rx="1" fill="#fff"/><rect x="6.5" y="6.5" width="5.5" height="5.5" rx="1" fill="#fff"/></svg><div class="abs" style="left:31px;top:4px;width:1px;height:9px;background:#888"></div><svg class="abs" style="left:41px;top:2px" width="13" height="13" viewBox="0 0 13 13"><rect width="13" height="13" rx="2.5" fill="#808080"/><circle cx="6.5" cy="6.5" r="4" fill="none" stroke="#ececec" stroke-width="1.3"/><path d="M6.5 2.6 V7.6 M2.6 8.6 L6.5 7.4 L10.4 8.6" stroke="#ececec" stroke-width="1.4" fill="none"/></svg><svg class="abs" style="left:66px;top:2px" width="13" height="13" viewBox="0 0 13 13"><rect width="13" height="13" rx="2.5" fill="#808080"/><circle cx="6.5" cy="6.5" r="4" fill="none" stroke="#ececec" stroke-width="1.3"/><path d="M6.5 2.6 V7.6 M2.6 8.6 L6.5 7.4 L10.4 8.6" stroke="#ececec" stroke-width="1.4" fill="none"/></svg><svg class="abs" style="left:91px;top:2px" width="13" height="13" viewBox="0 0 13 13"><rect width="13" height="13" rx="2.5" fill="#808080"/><circle cx="6.5" cy="6.5" r="4" fill="none" stroke="#ececec" stroke-width="1.3"/><path d="M6.5 2.6 V7.6 M2.6 8.6 L6.5 7.4 L10.4 8.6" stroke="#ececec" stroke-width="1.4" fill="none"/></svg><svg class="abs" style="left:116px;top:2px" width="13" height="13" viewBox="0 0 13 13"><rect width="13" height="13" rx="2.5" fill="#808080"/><circle cx="6.5" cy="6.5" r="4" fill="none" stroke="#ececec" stroke-width="1.3"/><path d="M6.5 2.6 V7.6 M2.6 8.6 L6.5 7.4 L10.4 8.6" stroke="#ececec" stroke-width="1.4" fill="none"/></svg><div class="abs" style="left:121px;top:16px;width:5px;height:1.5px;background:#ccc"></div><div class="t" style="left:837px;top:4px;font-size:8px;line-height:10px">6.36 KB/s</div><div class="t" style="left:898px;top:4px;font-size:8px;line-height:10px">5.57 KB/s</div><svg class="abs" style="left:873.5px;top:5.5px" width="4" height="6" viewBox="0 0 4 6"><path d="M2 0 v3" stroke="#eee" stroke-width="1.2"/><path d="M0 2.6 L2 5.6 L4 2.6z" fill="#eee"/></svg><svg class="abs" style="left:934px;top:5px" width="4" height="6" viewBox="0 0 4 6"><path d="M2 6 v-3" stroke="#eee" stroke-width="1.2"/><path d="M0 3.4 L2 0.4 L4 3.4z" fill="#eee"/></svg><div class="abs" style="left:955px;top:4.5px;width:8px;height:8px;border-radius:50%;background:#7cc67a"></div><svg class="abs" style="left:979.2px;top:3.2px" width="11" height="11" viewBox="0 0 11 11"><circle cx="5.5" cy="5.5" r="4.6" fill="none" stroke="#f2f2f2" stroke-width="1.3"/><path d="M6.2 2.6 L4.3 5.1 L6.7 5.9 L4.8 8.4" stroke="#f2f2f2" stroke-width="1.2" fill="none"/></svg><svg class="abs" style="left:1006.8px;top:3.2px" width="11" height="11" viewBox="0 0 11 11"><path d="M1.2 4.6 A4.4 4.4 0 0 1 9.6 3.8 M9.8 6.4 A4.4 4.4 0 0 1 1.4 7.2" stroke="#f2f2f2" stroke-width="1.3" fill="none"/><path d="M8.4 2.6 L10.3 4.4 L10.4 2z M2.6 8.4 L0.7 6.6 L0.6 9z" fill="#f2f2f2"/><rect x="3.9" y="3.9" width="3.2" height="3.2" fill="#f6f6f6"/></svg><svg class="abs" style="left:1037px;top:3px" width="11" height="12" viewBox="0 0 11 12"><path d="M5.5 1 C2.5 1 2.5 4 2.5 6 L1 9 H10 L8.5 6 C8.5 4 8.5 1 5.5 1z" fill="#eee"/><circle cx="5.5" cy="10.5" r="1.3" fill="#eee"/></svg><div class="abs" style="left:1049px;top:1.5px;width:5px;height:5px;border-radius:50%;background:#3a9af0"></div><svg class="abs" style="left:1065px;top:3px" width="11" height="11" viewBox="0 0 11 11"><circle cx="4.5" cy="4.5" r="3.2" fill="none" stroke="#eee" stroke-width="1.5"/><path d="M7 7 L10 10" stroke="#eee" stroke-width="1.8"/></svg><svg class="abs" style="left:1093px;top:3px" width="12" height="12" viewBox="0 0 12 12"><circle cx="6" cy="6" r="5.5" fill="#4a9ef0"/><circle cx="6" cy="4.5" r="2" fill="#fff"/><path d="M2.5 9.5 a4 3 0 0 1 7 0" fill="#fff"/></svg><div class="t" style="left:1110px;top:3.5px;font-size:8px;line-height:10px">个人空间</div><svg class="abs" style="left:1159px;top:4px" width="9" height="9" viewBox="0 0 9 9"><path d="M0.7 3 V0.7 H3 M6 0.7 H8.3 V3 M8.3 6 V8.3 H6 M3 8.3 H0.7 V6" stroke="#eee" stroke-width="1.4" fill="none"/></svg><div class="abs" style="left:1187px;top:8px;width:9px;height:1px;background:#ddd"></div><svg class="abs" style="left:1216px;top:4px" width="10" height="10" viewBox="0 0 10 10"><rect x="1" y="3" width="6" height="6" fill="none" stroke="#ddd" stroke-width="1"/><path d="M3 3 V1 H9 V7 H7" stroke="#ddd" stroke-width="1" fill="none"/></svg><svg class="abs" style="left:1247px;top:3.5px" width="10" height="10" viewBox="0 0 10 10"><path d="M1 1 L9 9 M9 1 L1 9" stroke="#ddd" stroke-width="1.1"/></svg></div>
<div class="dicon" style="left:38px;top:49px"><svg width="39" height="39" viewBox="0 0 39 39"><defs><linearGradient id="gd" x1="0" y1="0" x2="0" y2="1"><stop offset="0" stop-color="#72c2f6"/><stop offset="1" stop-color="#3286e6"/></linearGradient></defs>
<rect width="39" height="39" fill="url(#gd)"/>
<path d="M3.7 18.3 L26.8 16.4 C29 15.5 30.5 13 30.3 10.8 L24.3 9 C27 8.5 28.5 7.5 29.5 6.8 L32.5 8.4 L35.5 7.1 C34 10 32.5 12 31.5 14 C32 20 30 25 26.8 26.3 C24 29 22 31 19.4 31.8 C12 30 5 26 3.7 18.3 Z" fill="#f4faff"/>
<circle cx="15.4" cy="20" r="0.8" fill="#3a6a90"/>
<path d="M6.6 14.6 C6.6 10.5 10.7 10.5 10.7 13.2 C10.7 10.5 14.8 10.5 14.8 14.6" stroke="#e8f6ff" stroke-width="1.5" fill="none"/>
</svg></div><div class="dlabel" style="left:7.5px;top:93px">Docker</div><div class="dicon" style="left:114px;top:49px"><svg width="39" height="39" viewBox="0 0 39 39"><rect width="39" height="39" fill="#fff"/><path d="M5 10 h11 l3 3 h15 v16 h-29 z" fill="#10a8f0"/></svg></div><div class="dlabel" style="left:83.5px;top:93px">文件管理</div><div class="dicon" style="left:38px;top:124.8px"><svg width="39" height="39" viewBox="0 0 39 39"><defs><linearGradient id="lc1" x1="0" y1="0" x2="0" y2="1"><stop offset="0" stop-color="#b8f0ff"/><stop offset="1" stop-color="#5ab8e0"/></linearGradient><linearGradient id="lc2" x1="0" y1="0" x2="1" y2="1"><stop offset="0" stop-color="#c8ffb8"/><stop offset="1" stop-color="#48d070"/></linearGradient><linearGradient id="lc3" x1="0" y1="0" x2="1" y2="1"><stop offset="0" stop-color="#ffc8f8"/><stop offset="1" stop-color="#e060d8"/></linearGradient></defs><path d="M15 9 q2 -5 8 -4" stroke="#3a3a3a" stroke-width="2.2" fill="none"/><rect x="13" y="8" width="13" height="12" rx="1.5" fill="url(#lc1)"/><rect x="6" y="19" width="13.5" height="12.5" rx="1.5" fill="url(#lc2)"/><rect x="19.5" y="19" width="13.5" height="12.5" rx="1.5" fill="url(#lc3)"/><rect x="17" y="10" width="3" height="9" fill="#7a8a90" opacity=".6"/></svg></div><div class="dlabel" style="left:7.5px;top:168.8px">LANraragi</div><div class="dicon" style="left:114px;top:124.8px"><svg width="39" height="39" viewBox="0 0 39 39"><rect width="39" height="39" fill="#fff"/><g transform="translate(19.5 19.5) scale(1.0)"><ellipse cx="2.6" cy="-7.2" rx="5.6" ry="7.6" fill="#f8a43a" opacity="0.93" transform="rotate(0)"/><ellipse cx="2.6" cy="-7.2" rx="5.6" ry="7.6" fill="#c4d84a" opacity="0.93" transform="rotate(45)"/><ellipse cx="2.6" cy="-7.2" rx="5.6" ry="7.6" fill="#5cc266" opacity="0.93" transform="rotate(90)"/><ellipse cx="2.6" cy="-7.2" rx="5.6" ry="7.6" fill="#2cc4d0" opacity="0.93" transform="rotate(135)"/><ellipse cx="2.6" cy="-7.2" rx="5.6" ry="7.6" fill="#2a8cf0" opacity="0.93" transform="rotate(180)"/><ellipse cx="2.6" cy="-7.2" rx="5.6" ry="7.6" fill="#8a58dc" opacity="0.93" transform="rotate(225)"/><ellipse cx="2.6" cy="-7.2" rx="5.6" ry="7.6" fill="#ee4f8e" opacity="0.93" transform="rotate(270)"/><ellipse cx="2.6" cy="-7.2" rx="5.6" ry="7.6" fill="#f25a5a" opacity="0.93" transform="rotate(315)"/></g></svg></div><div class="dlabel" style="left:83.5px;top:168.8px">智能相册(旧版)</div><div class="dicon" style="left:38px;top:200.6px"><svg width="39" height="39" viewBox="0 0 39 39"><defs><linearGradient id="gt" x1="0" y1="0" x2="0" y2="1"><stop offset="0" stop-color="#1aa0f8"/><stop offset="1" stop-color="#0a7ef0"/></linearGradient></defs><rect width="39" height="39" fill="url(#gt)"/><path d="M10.2 20.5 L16.5 12.8 V32.5" stroke="#d6efff" stroke-width="2.6" fill="none" stroke-linecap="round" stroke-linejoin="round"/><path d="M23.5 12.2 V29.2 L31.4 20" stroke="#d6efff" stroke-width="2.6" fill="none" stroke-linecap="round" stroke-linejoin="round"/></svg></div><div class="dlabel" style="left:7.5px;top:244.6px">任务中心</div><div class="dicon" style="left:114px;top:200.6px"><svg width="39" height="39" viewBox="0 0 39 39"><rect width="39" height="39" fill="#fff"/><defs><linearGradient id="gch" x1="0" y1="0" x2="1" y2="1"><stop offset="0" stop-color="#3cb0fa"/><stop offset="1" stop-color="#1a6ae8"/></linearGradient></defs><circle cx="19.8" cy="19.8" r="15" fill="url(#gch)"/><rect x="11.3" y="13.8" width="17.6" height="14.2" rx="2.2" fill="#fff"/><path d="M22.8 27.5 L25.8 30.8 L26.4 27.5z" fill="#fff"/><circle cx="17.2" cy="20.6" r="1.1" fill="#2a7ae8"/><circle cx="22.7" cy="20.6" r="1.1" fill="#2a7ae8"/></svg></div><div class="dlabel" style="left:83.5px;top:244.6px">聊天</div><div class="dicon" style="left:38px;top:276.4px"><svg width="39" height="39" viewBox="0 0 39 39"><defs><linearGradient id="gs" x1="0" y1="0" x2="0" y2="1"><stop offset="0" stop-color="#ff9a3a"/><stop offset="1" stop-color="#f8205a"/></linearGradient></defs><rect width="39" height="39" fill="url(#gs)"/><path d="M31.8 18.8 A12.6 12.6 0 1 1 18.6 6.9" stroke="#fff" stroke-width="2.2" fill="none" stroke-linecap="round"/><path d="M16.5 21.7 L31 8.2 M24.6 7.9 H31.3 V14.3" stroke="#fff" stroke-width="2.2" fill="none" stroke-linecap="round" stroke-linejoin="round"/></svg></div><div class="dlabel" style="left:7.5px;top:320.4px">公网分享文件</div><div class="dicon" style="left:114px;top:276.4px"><svg width="39" height="39" viewBox="0 0 39 39"><defs><linearGradient id="gn" x1="0" y1="0" x2="0" y2="1"><stop offset="0" stop-color="#36b2f6"/><stop offset="1" stop-color="#1e92ee"/></linearGradient><linearGradient id="gn2" x1="0" y1="0" x2="0" y2="1"><stop offset="0" stop-color="#1a64c8"/><stop offset="1" stop-color="#2a88e0"/></linearGradient></defs><rect width="39" height="39" fill="url(#gn)"/><path d="M16 6 h4.2 l5 17 V6 h4.3 v27 h-4.2 l-5 -17 V33 h-4.3z" fill="url(#gn2)"/><path d="M11 7.5 q1.8 -2 3.6 0 V29 l-1.8 3 l-1.8 -3z" fill="#bfe4ff" stroke="#f0f8ff" stroke-width=".8"/><path d="M11.3 29 l1.5 2.6 l1.5 -2.6z" fill="#f0a0c0"/></svg></div><div class="dlabel" style="left:83.5px;top:320.4px">记事本</div><div class="dicon" style="left:38px;top:352.2px"><svg width="39" height="39" viewBox="0 0 39 39"><defs><linearGradient id="gp" x1="0" y1="0" x2="1" y2="1"><stop offset="0" stop-color="#22f0b0"/><stop offset="1" stop-color="#18c4f4"/></linearGradient></defs><rect width="39" height="39" fill="url(#gp)"/><circle cx="19.3" cy="15.4" r="1.6" fill="none" stroke="#fff" stroke-width="1"/><path d="M22.06 13.09 A3.6 3.6 0 0 1 22.06 17.71 M16.54 13.09 A3.6 3.6 0 0 0 16.54 17.71 M23.90 11.54 A6 6 0 0 1 23.90 19.26 M14.70 11.54 A6 6 0 0 0 14.70 19.26 M25.73 10.00 A8.4 8.4 0 0 1 25.73 20.80 M12.87 10.00 A8.4 8.4 0 0 0 12.87 20.80" stroke="#fff" stroke-width="0.9" fill="none"/><path d="M19.3 17 V26.5" stroke="#f0fffa" stroke-width="0.9"/><path d="M14.4 29.3 H25.5" stroke="#e8fff8" stroke-width="0.9" stroke-dasharray="2 1"/></svg></div><div class="dlabel" style="left:7.5px;top:396.2px">公网访问</div><div class="dicon" style="left:114px;top:352.2px"><svg width="39" height="39" viewBox="0 0 39 39"><defs><linearGradient id="gm" x1="0" y1="0" x2="0" y2="1"><stop offset="0" stop-color="#2a2e2e"/><stop offset="1" stop-color="#0e1614"/></linearGradient></defs><rect width="39" height="39" fill="url(#gm)"/><path d="M2.5 22 L8 22 L10 20.8 L12 22 L13.2 22 L14 6.4 L15.4 27.5 L16.6 20.5 L18 22 L21 22 Q23 16.5 25 21 Q27 24.5 29 20.5 Q31 18.5 33 22 L35.6 22.6" stroke="#34c89a" stroke-width="1" fill="none"/></svg></div><div class="dlabel" style="left:83.5px;top:396.2px">设备监控</div><div class="dicon" style="left:38px;top:428px"><svg width="39" height="39" viewBox="0 0 39 39"><rect width="39" height="39" fill="#fff"/><defs><linearGradient id="gy" x1="0" y1="0" x2="0" y2="1"><stop offset="0" stop-color="#ffc000"/><stop offset="1" stop-color="#ffd040"/></linearGradient></defs><path d="M5.4 5.5 q0 -1.5 1.5 -1.5 h7 q1 0 1.4 .8 l1.2 2.4 h15.8 q1.5 0 1.5 1.5 v19.2 h-28.4z" fill="#ffa810"/><rect x="5.4" y="9.5" width="28.4" height="18.4" fill="url(#gy)"/><path d="M6 34 H32.6" stroke="#9aa0a6" stroke-width="1.3"/><path d="M19.5 28 V34" stroke="#2a8ee8" stroke-width="1.6"/><path d="M16.5 34.6 L19.5 31.5 L22.5 34.6z" fill="#2a9af0"/></svg></div><div class="dlabel" style="left:7.5px;top:472px">局域网共享</div><div class="dicon" style="left:114px;top:428px"><svg width="39" height="39" viewBox="0 0 39 39"><rect width="39" height="39" fill="#3a3a3a"/><g transform="translate(19.5 19.5)"><path d="M-1.3 -11.5 L-0.7 -14.2 H0.7 L1.3 -11.5z" fill="#ececec" transform="rotate(0)"/><path d="M-1.3 -11.5 L-0.7 -14.2 H0.7 L1.3 -11.5z" fill="#ececec" transform="rotate(15)"/><path d="M-1.3 -11.5 L-0.7 -14.2 H0.7 L1.3 -11.5z" fill="#ececec" transform="rotate(30)"/><path d="M-1.3 -11.5 L-0.7 -14.2 H0.7 L1.3 -11.5z" fill="#ececec" transform="rotate(45)"/><path d="M-1.3 -11.5 L-0.7 -14.2 H0.7 L1.3 -11.5z" fill="#ececec" transform="rotate(60)"/><path d="M-1.3 -11.5 L-0.7 -14.2 H0.7 L1.3 -11.5z" fill="#ececec" transform="rotate(75)"/><path d="M-1.3 -11.5 L-0.7 -14.2 H0.7 L1.3 -11.5z" fill="#ececec" transform="rotate(90)"/><path d="M-1.3 -11.5 L-0.7 -14.2 H0.7 L1.3 -11.5z" fill="#ececec" transform="rotate(105)"/><path d="M-1.3 -11.5 L-0.7 -14.2 H0.7 L1.3 -11.5z" fill="#ececec" transform="rotate(120)"/><path d="M-1.3 -11.5 L-0.7 -14.2 H0.7 L1.3 -11.5z" fill="#ececec" transform="rotate(135)"/><path d="M-1.3 -11.5 L-0.7 -14.2 H0.7 L1.3 -11.5z" fill="#ececec" transform="rotate(150)"/><path d="M-1.3 -11.5 L-0.7 -14.2 H0.7 L1.3 -11.5z" fill="#ececec" transform="rotate(165)"/><path d="M-1.3 -11.5 L-0.7 -14.2 H0.7 L1.3 -11.5z" fill="#ececec" transform="rotate(180)"/><path d="M-1.3 -11.5 L-0.7 -14.2 H0.7 L1.3 -11.5z" fill="#ececec" transform="rotate(195)"/><path d="M-1.3 -11.5 L-0.7 -14.2 H0.7 L1.3 -11.5z" fill="#ececec" transform="rotate(210)"/><path d="M-1.3 -11.5 L-0.7 -14.2 H0.7 L1.3 -11.5z" fill="#ececec" transform="rotate(225)"/><path d="M-1.3 -11.5 L-0.7 -14.2 H0.7 L1.3 -11.5z" fill="#ececec" transform="rotate(240)"/><path d="M-1.3 -11.5 L-0.7 -14.2 H0.7 L1.3 -11.5z" fill="#ececec" transform="rotate(255)"/><path d="M-1.3 -11.5 L-0.7 -14.2 H0.7 L1.3 -11.5z" fill="#ececec" transform="rotate(270)"/><path d="M-1.3 -11.5 L-0.7 -14.2 H0.7 L1.3 -11.5z" fill="#ececec" transform="rotate(285)"/><path d="M-1.3 -11.5 L-0.7 -14.2 H0.7 L1.3 -11.5z" fill="#ececec" transform="rotate(300)"/><path d="M-1.3 -11.5 L-0.7 -14.2 H0.7 L1.3 -11.5z" fill="#ececec" transform="rotate(315)"/><path d="M-1.3 -11.5 L-0.7 -14.2 H0.7 L1.3 -11.5z" fill="#ececec" transform="rotate(330)"/><path d="M-1.3 -11.5 L-0.7 -14.2 H0.7 L1.3 -11.5z" fill="#ececec" transform="rotate(345)"/><circle r="10.2" fill="none" stroke="#ececec" stroke-width="3"/><path d="M0 2 V-10 M0 2 L-8.5 6.5 M0 2 L8.5 6.5" stroke="#ececec" stroke-width="2.2"/></g></svg></div><div class="dlabel" style="left:83.5px;top:472px">设置</div><div class="dicon" style="left:38px;top:503.8px"><svg width="39" height="39" viewBox="0 0 39 39"><rect width="39" height="39" fill="#fff"/><defs><linearGradient id="gcl" x1="0" y1="0" x2="0" y2="1"><stop offset="0" stop-color="#5c5c5c"/><stop offset="1" stop-color="#333"/></linearGradient></defs><path d="M7.3 10 q0 -3 3 -3 h18.3 q3 0 3 3 v3.8 h-24.3z" fill="#333"/><path d="M11.5 7 L14.5 10.2 L11.5 13.4 H14.5 L17.5 10.2 L14.5 7z" fill="#fff"/><path d="M18.5 7 L21.5 10.2 L18.5 13.4 H21.5 L24.5 10.2 L21.5 7z" fill="#fff"/><path d="M25.5 7 L28.5 10.2 L25.5 13.4 H28.5 L31.5 10.2 L28.5 7z" fill="#fff"/><path d="M7.3 13.6 h24.3 v15 q0 3 -3 3 h-18.3 q-3 0 -3 -3z" fill="url(#gcl)"/><path d="M16.8 18 V25.3 L23 21.6z" fill="#fff"/></svg></div><div class="dlabel" style="left:7.5px;top:547.8px">影视</div><div class="dicon" style="left:114px;top:503.8px"><svg width="39" height="39" viewBox="0 0 39 39"><rect width="39" height="39" fill="#3a86f5"/><path d="M7 14 C12 13 16 16 18 19 C21 14 26 10 33 8 C28 12 26 16 25 20 L31 21 L24 24 L26 32 L20 26 C15 25 10 20 7 14 Z" fill="#fff"/></svg></div><div class="dlabel" style="left:83.5px;top:547.8px">迅雷</div><div class="dicon" style="left:38px;top:579.6px"><svg width="39" height="39" viewBox="0 0 39 39"><rect width="39" height="39" fill="#fff"/><defs><linearGradient id="gcb" x1="0" y1="0" x2="1" y2="1"><stop offset="0" stop-color="#2a78f4"/><stop offset="1" stop-color="#0e5ae8"/></linearGradient><linearGradient id="gcc" x1="0" y1="0" x2="1" y2="0"><stop offset="0" stop-color="#14d4e4"/><stop offset="1" stop-color="#20b8f0"/></linearGradient></defs><circle cx="28.5" cy="23.6" r="6.6" fill="#34a8fa"/><circle cx="20" cy="17.2" r="9.3" fill="url(#gcb)"/><path d="M11.5 30.2 H28.5 V24 L20 26.5z" fill="#2a9cf6"/><path d="M4 23.2 a7.5 7 0 0 1 14.5 -2.5 L27 30.2 H11.5 a7.5 7 0 0 1 -7.5 -7z" fill="url(#gcc)"/></svg></div><div class="dlabel" style="left:7.5px;top:623.6px">文件备份</div><div class="dicon" style="left:114px;top:579.6px"><svg width="39" height="39" viewBox="0 0 39 39"><rect width="39" height="39" fill="#fff"/><rect width="39" height="39" fill="#fff6f8"/><path d="M14 12.5 L30 9.3 V14.2 L14 17.4z" fill="#f2607c"/><path d="M14 12.5 V28.5 M30 9.3 V25.5" stroke="#ee4c6c" stroke-width="2.4"/><circle cx="11.2" cy="28.6" r="3.8" fill="#e83a5c"/><circle cx="27.2" cy="25.6" r="3.8" fill="#e83a5c"/></svg></div><div class="dlabel" style="left:83.5px;top:623.6px">音乐</div>
<div id="docker"><div class="abs" style="left:0;top:0;width:791px;height:21px;background:#f7f7f7"></div><div class="t" style="left:10.5px;top:5px;font-size:9.6px;line-height:12px;color:#333">Docker</div><div class="abs" style="left:737.75px;top:5.450000000000003px;width:9.5px;height:9.5px;border-radius:50%;background:#9d9d9d"></div><div class="abs" style="left:754.85px;top:5.450000000000003px;width:9.5px;height:9.5px;border-radius:50%;background:#9d9d9d"></div><div class="abs" style="left:771.85px;top:5.450000000000003px;width:9.5px;height:9.5px;border-radius:50%;background:#9d9d9d"></div><div class="abs" style="left:0;top:21px;width:131px;height:506px;background:#fbfbfb"></div><div class="abs" style="left:10px;top:32px;width:112px;height:25px;background:#efefef;border-radius:3px"></div><div class="dk-item" style="top:33.3px"><div class="ic"><svg width="10" height="10" viewBox="0 0 10 10"><circle cx="5" cy="5" r="4.6" fill="#2f8ae8"/><path d="M3 6 q0 -3 3 -3 q-1 2 1 3 q-1 2 -2 1.6 q-2 0 -2 -1.6" fill="#fff"/></svg></div><div class="tx">精选应用</div></div><div class="dk-item" style="top:63.3px"><div class="ic"><svg width="10" height="10" viewBox="0 0 10 10"><rect x="0" y="0" width="4.5" height="4.5" fill="#2f8ae8"/><rect x="5.5" y="0" width="4.5" height="3" fill="#2f8ae8"/><rect x="0" y="5.5" width="4.5" height="4.5" fill="#2f8ae8"/><rect x="5.5" y="4" width="4.5" height="6" fill="#2f8ae8"/></svg></div><div class="tx">正在运行</div></div><div class="dk-item" style="top:93.3px"><div class="ic"><svg width="10" height="10" viewBox="0 0 10 10"><path d="M5 0 L10 2.6 L5 5.2 L0 2.6z" fill="#2f8ae8"/><path d="M0 4.6 L5 7.2 L10 4.6 M0 6.8 L5 9.4 L10 6.8" stroke="#2f8ae8" stroke-width="1.2" fill="none"/></svg></div><div class="tx">Compose</div></div><div class="dk-item" style="top:123.3px"><div class="ic"><svg width="10" height="10" viewBox="0 0 10 10"><rect x="1" y="1.5" width="8" height="6" fill="none" stroke="#2f8ae8" stroke-width="1.3"/><rect x="0" y="8" width="10" height="1.3" fill="#2f8ae8"/></svg></div><div class="tx">本地镜像</div></div><div class="dk-item" style="top:153.3px"><div class="ic"><svg width="10" height="10" viewBox="0 0 10 10"><circle cx="4" cy="4" r="3" fill="none" stroke="#2f8ae8" stroke-width="1.4"/><path d="M6.2 6.2 L9 9" stroke="#2f8ae8" stroke-width="1.6"/></svg></div><div class="tx">镜像搜索</div></div><div class="dk-item" style="top:460.90000000000003px"><div class="ic"><svg width="10" height="10" viewBox="0 0 10 10"><path d="M3 2 L0.8 5 L3 8 M7 2 L9.2 5 L7 8" stroke="#2f8ae8" stroke-width="1.2" fill="none"/><circle cx="3.8" cy="5" r=".6" fill="#2f8ae8"/><circle cx="5" cy="5" r=".6" fill="#2f8ae8"/><circle cx="6.2" cy="5" r=".6" fill="#2f8ae8"/></svg></div><div class="tx">网络管理</div></div><div class="dk-item" style="top:491.3px"><div class="ic"><svg width="10" height="10" viewBox="0 0 10 10"><g transform="translate(5 5)"><rect x="-1.4" y="-5" width="2.8" height="3" fill="#2f8ae8" transform="rotate(0)"/><rect x="-1.4" y="-5" width="2.8" height="3" fill="#2f8ae8" transform="rotate(60)"/><rect x="-1.4" y="-5" width="2.8" height="3" fill="#2f8ae8" transform="rotate(120)"/><rect x="-1.4" y="-5" width="2.8" height="3" fill="#2f8ae8" transform="rotate(180)"/><rect x="-1.4" y="-5" width="2.8" height="3" fill="#2f8ae8" transform="rotate(240)"/><rect x="-1.4" y="-5" width="2.8" height="3" fill="#2f8ae8" transform="rotate(300)"/><circle r="3.4" fill="#2f8ae8"/><circle r="1.3" fill="#fff"/></g></svg></div><div class="tx">应用设置</div></div><div class="card" style="left:142.4px"><div class="abs" style="left:8px;top:8px"><svg width="37" height="37" viewBox="0 0 37 37"><rect width="37" height="37" rx="7" fill="#3a86f5"/><path d="M6 13 C11 12 15 15 17 18 C20 13 25 9 31 7.5 C26.5 11 24.5 15 23.5 19 L29.5 20 L22.5 23 L24.5 30.5 L18.5 24.5 C14 23.5 9 19 6 13 Z" fill="#fff"/></svg></div><div class="nm">迅雷</div><div class="sub">下载工具 推荐</div><div class="btn">打开</div></div><div class="card" style="left:359.6px"><div class="abs" style="left:8px;top:8px"><svg width="37" height="37" viewBox="0 0 37 37" style="overflow:visible"><defs><linearGradient id="qb" x1="0" y1="0" x2="0" y2="1"><stop offset="0" stop-color="#4a98e8"/><stop offset="1" stop-color="#2f70c8"/></linearGradient></defs><circle cx="15.8" cy="18.2" r="17" fill="url(#qb)"/><g stroke="#dcf2ff" stroke-width="1.3" fill="none"><ellipse cx="9.2" cy="18.2" rx="4.9" ry="5.5"/><path d="M14.1 12.6 V29.9 M18.6 7 V23.7"/><ellipse cx="23.4" cy="18.2" rx="4.9" ry="5.5"/></g></svg></div><div class="nm">qBittorrent</div><div class="sub">下载工具</div><div class="btn">安装</div></div><div class="card" style="left:574.7px"><div class="abs" style="left:8px;top:8px"><svg width="37" height="37" viewBox="0 0 37 37"><defs><linearGradient id="tr" x1="0" y1="0" x2="1" y2="0"><stop offset="0" stop-color="#bdbdbd"/><stop offset=".3" stop-color="#f4f4f4"/><stop offset=".7" stop-color="#f4f4f4"/><stop offset="1" stop-color="#bdbdbd"/></linearGradient><linearGradient id="tr2" x1="0" y1="0" x2="0" y2="1"><stop offset="0" stop-color="#e8e8e8"/><stop offset="1" stop-color="#6a6a6a"/></linearGradient></defs><rect x="2.6" y="5" width="29.6" height="28" rx="4.5" fill="url(#tr)" stroke="#6a6a6a" stroke-width="1.7"/><rect x="5.7" y="1.9" width="24.1" height="8" rx="4" fill="#c40a0a"/><rect x="13.6" y="1.6" width="7.7" height="12" fill="#d8d8d8"/><rect x="14.6" y="12" width="5.6" height="10.5" fill="url(#tr2)"/><path d="M12.2 21.8 H22.3 L17.25 28.3z" fill="#333"/></svg></div><div class="nm">Transmission</div><div class="sub">下载工具</div><div class="btn">安装</div></div></div>
<div id="fm"><div class="abs" style="left:0;top:0;width:790px;height:36px;background:linear-gradient(#f8f8f8 0,#f8f8f8 27px,#fcfcfc 31px,#fff 36px)"></div><svg class="abs" style="left:9.5px;top:10px" width="9" height="9" viewBox="0 0 9 9"><path d="M8.5 4.5 H1 M4.5 1 L1 4.5 L4.5 8" stroke="#555" stroke-width="1.3" fill="none"/></svg><svg class="abs" style="left:31px;top:10px" width="9" height="9" viewBox="0 0 9 9"><path d="M7.6 3.2 A3.6 3.6 0 1 0 8 5.2" stroke="#555" stroke-width="1.3" fill="none"/><path d="M5.5 0.8 L8.3 1 L8 3.8z" fill="#555"/></svg><div class="abs" style="left:57px;top:6.5px;width:411px;height:17.5px;background:#fff"></div><div class="t" style="left:63.30000000000001px;top:10px;font-size:8.4px;line-height:10px;color:#3d8fe0">存储池:系统存储池</div><div class="t" style="left:146.8px;top:10px;font-size:8.4px;line-height:10px;color:#3d8fe0">docker</div><div class="t" style="left:190.5px;top:10px;font-size:8.4px;line-height:10px;color:#3d8fe0">lanraragi</div><div class="t" style="left:242.79999999999995px;top:10px;font-size:8.4px;line-height:10px;color:#3d8fe0">content</div><svg class="abs" style="left:136.7px;top:12.799999999999997px" width="3" height="5" viewBox="0 0 3 5"><path d="M0 0 L3 2.5 L0 5z" fill="#3d8fe0"/></svg><svg class="abs" style="left:180.2px;top:12.799999999999997px" width="3" height="5" viewBox="0 0 3 5"><path d="M0 0 L3 2.5 L0 5z" fill="#3d8fe0"/></svg><svg class="abs" style="left:231.5px;top:12.799999999999997px" width="3" height="5" viewBox="0 0 3 5"><path d="M0 0 L3 2.5 L0 5z" fill="#3d8fe0"/></svg><svg class="abs" style="left:279.9px;top:12.799999999999997px" width="3" height="5" viewBox="0 0 3 5"><path d="M0 0 L3 2.5 L0 5z" fill="#3d8fe0"/></svg><svg class="abs" style="left:480.4px;top:9px" width="10" height="10" viewBox="0 0 10 10"><path d="M0.5 2 h3.5 l1 1.2 h4.5 v6 h-9z" fill="#555"/><path d="M5 4.5 v3 M3.5 6 h3" stroke="#f8f8f8" stroke-width="0.9"/></svg><svg class="abs" style="left:505px;top:9px" width="10" height="10" viewBox="0 0 10 10"><path d="M5 1 L1.5 4.5 h2.2 v3 h2.6 v-3 h2.2z" fill="#555"/><rect x="1.5" y="8.3" width="7" height="1.2" fill="#555"/></svg><svg class="abs" style="left:529.5px;top:9px" width="10" height="10" viewBox="0 0 10 10"><path d="M0.5 2 h3.5 l1 1.2 h4.5 v6 h-9z" fill="#555"/><path d="M5 4.3 v3.5 M3.6 5.6 L5 4.2 L6.4 5.6" stroke="#f8f8f8" stroke-width="0.9" fill="none"/></svg><svg class="abs" style="left:553.6px;top:9px" width="10" height="10" viewBox="0 0 10 10"><ellipse cx="5" cy="5" rx="4.6" ry="3.3" fill="#555"/><circle cx="5" cy="5" r="1.5" fill="#f8f8f8"/><path d="M1 0.8 L9 9.2" stroke="#f8f8f8" stroke-width="1.6"/><path d="M1 0.8 L9 9.2" stroke="#555" stroke-width="0.9"/></svg><svg class="abs" style="left:579px;top:9px" width="10" height="10" viewBox="0 0 10 10"><circle cx="6.5" cy="3" r="1.8" fill="#555"/><path d="M3.5 9.5 a3 3 0 0 1 6 0z" fill="#555"/><path d="M3 2 A3.5 3.5 0 0 0 1.8 8" stroke="#555" stroke-width="1.1" fill="none"/></svg><svg class="abs" style="left:602.6px;top:9px" width="10" height="10" viewBox="0 0 10 10"><rect x="1.2" y="1.2" width="3.4" height="3.6" fill="none" stroke="#555" stroke-width="1.3"/><rect x="6" y="1.2" width="3.4" height="3.6" fill="none" stroke="#555" stroke-width="1.3"/><rect x="1.2" y="6.2" width="3.4" height="3.6" fill="none" stroke="#555" stroke-width="1.3"/><rect x="6" y="6.2" width="3.4" height="3.6" fill="none" stroke="#555" stroke-width="1.3"/></svg><svg class="abs" style="left:626.8px;top:9px" width="10" height="10" viewBox="0 0 10 10"><path d="M0.6 3 h8.8 M0.6 5.2 h6 M0.6 7.4 h3" stroke="#555" stroke-width="1"/></svg><div class="abs" style="left:650px;top:6px;width:78px;height:17.5px;background:#fff;border:1px solid #d6d6d6;border-radius:3px"></div><svg class="abs" style="left:656px;top:10.5px" width="8" height="8" viewBox="0 0 8 8"><circle cx="3.3" cy="3.3" r="2.4" fill="none" stroke="#555" stroke-width="1.1"/><path d="M5 5 L7.5 7.5" stroke="#555" stroke-width="1.2"/></svg><div class="t" style="left:669.6px;top:9.5px;font-size:8.4px;line-height:10px;color:#999">搜索文件</div><div class="abs" style="left:737.05px;top:9.549999999999997px;width:9.5px;height:9.5px;border-radius:50%;background:#f5a11c"></div><div class="abs" style="left:754.05px;top:9.549999999999997px;width:9.5px;height:9.5px;border-radius:50%;background:#4caf50"></div><div class="abs" style="left:771.25px;top:9.549999999999997px;width:9.5px;height:9.5px;border-radius:50%;background:#ee3d3a"></div><div class="abs" style="left:131px;top:31px;width:1px;height:495px;background:#f4f4f4"></div><div class="fm-sec" style="top:46.5px">存储池</div><div class="fm-sec" style="top:99.0px">外部存储</div><div class="fm-sec" style="top:149.5px">快速访问</div><div class="fm-sec" style="top:373.0px">分类聚合</div><div class="abs" style="left:13px;top:60px;width:107px;height:22px;background:#f0f0f0;border-radius:3px"></div><svg class="abs" style="left:19px;top:65.5px" width="11" height="11" viewBox="0 0 11 11"><ellipse cx="5.5" cy="2" rx="5.2" ry="1.8" fill="#2f86e0"/><path d="M0.3 3.3 v2 a5.2 1.8 0 0 0 10.4 0 v-2 a5.2 1.8 0 0 1 -10.4 0z M0.3 6.8 v2 a5.2 1.8 0 0 0 10.4 0 v-2 a5.2 1.8 0 0 1 -10.4 0z" fill="#2f86e0"/></svg><div class="t" style="left:38px;top:67px;font-size:9px;line-height:11px;color:#444">系统存储池</div><svg class="abs" style="left:19.5px;top:119px" width="8" height="8" viewBox="0 0 8 8"><path d="M4 0.3 v7.4 M0.3 4 h7.4" stroke="#2f86e0" stroke-width="1.2"/></svg><div class="t" style="left:36.5px;top:118.19999999999999px;font-size:9px;line-height:11px;color:#444">添加</div><div class="abs" style="left:18.5px;top:169.5px"><svg width="11" height="9" viewBox="0 0 11 9"><path d="M0 1 q0 -1 1 -1 h3 l1.2 1.2 h4.8 q1 0 1 1 v5.8 q0 1 -1 1 h-9 q-1 0 -1 -1z" fill="#2f86e0"/></svg></div><div class="t" style="left:36.5px;top:168.7px;font-size:9px;line-height:11px;color:#444">主页</div><div class="abs" style="left:18.5px;top:191.25px"><svg width="11" height="9" viewBox="0 0 11 9"><path d="M0 1 q0 -1 1 -1 h3 l1.2 1.2 h4.8 q1 0 1 1 v5.8 q0 1 -1 1 h-9 q-1 0 -1 -1z" fill="#2f86e0"/></svg></div><div class="t" style="left:36.5px;top:190.45px;font-size:9px;line-height:11px;color:#444">桌面</div><div class="abs" style="left:18.5px;top:213.0px"><svg width="11" height="9" viewBox="0 0 11 9"><path d="M0 1 q0 -1 1 -1 h3 l1.2 1.2 h4.8 q1 0 1 1 v5.8 q0 1 -1 1 h-9 q-1 0 -1 -1z" fill="#2f86e0"/></svg></div><div class="t" style="left:36.5px;top:212.2px;font-size:9px;line-height:11px;color:#444">下载</div><div class="abs" style="left:18.5px;top:234.75px"><svg width="11" height="9" viewBox="0 0 11 9"><path d="M0 1 q0 -1 1 -1 h3 l1.2 1.2 h4.8 q1 0 1 1 v5.8 q0 1 -1 1 h-9 q-1 0 -1 -1z" fill="#2f86e0"/></svg></div><div class="t" style="left:36.5px;top:233.95px;font-size:9px;line-height:11px;color:#444">文档</div><div class="abs" style="left:18.5px;top:256.5px"><svg width="11" height="9" viewBox="0 0 11 9"><path d="M0 1 q0 -1 1 -1 h3 l1.2 1.2 h4.8 q1 0 1 1 v5.8 q0 1 -1 1 h-9 q-1 0 -1 -1z" fill="#2f86e0"/></svg></div><div class="t" style="left:36.5px;top:255.7px;font-size:9px;line-height:11px;color:#444">电影</div><div class="abs" style="left:18.5px;top:278.25px"><svg width="11" height="9" viewBox="0 0 11 9"><path d="M0 1 q0 -1 1 -1 h3 l1.2 1.2 h4.8 q1 0 1 1 v5.8 q0 1 -1 1 h-9 q-1 0 -1 -1z" fill="#2f86e0"/></svg></div><div class="t" style="left:36.5px;top:277.45px;font-size:9px;line-height:11px;color:#444">音乐</div><div class="abs" style="left:18.5px;top:300.0px"><svg width="11" height="9" viewBox="0 0 11 9"><path d="M0 1 q0 -1 1 -1 h3 l1.2 1.2 h4.8 q1 0 1 1 v5.8 q0 1 -1 1 h-9 q-1 0 -1 -1z" fill="#2f86e0"/></svg></div><div class="t" style="left:36.5px;top:299.2px;font-size:9px;line-height:11px;color:#444">相册</div><div class="abs" style="left:18.5px;top:321.75px"><svg width="11" height="9" viewBox="0 0 11 9"><path d="M0 1 q0 -1 1 -1 h3 l1.2 1.2 h4.8 q1 0 1 1 v5.8 q0 1 -1 1 h-9 q-1 0 -1 -1z" fill="#2f86e0"/></svg></div><div class="t" style="left:36.5px;top:320.95px;font-size:9px;line-height:11px;color:#444">备份</div><div class="abs" style="left:18.5px;top:343.5px"><svg width="11" height="9" viewBox="0 0 11 9"><path d="M0 1 q0 -1 1 -1 h3 l1.2 1.2 h4.8 q1 0 1 1 v5.8 q0 1 -1 1 h-9 q-1 0 -1 -1z" fill="#2f86e0"/></svg></div><div class="t" style="left:36.5px;top:342.7px;font-size:9px;line-height:11px;color:#444">Docker</div><svg class="abs" style="left:18px;top:391.5px" width="12" height="10" viewBox="0 0 12 10"><path d="M0 1 q0 -1 1 -1 h3.5 l1.2 1.2 h5.3 q1 0 1 1 v6.8 q0 1 -1 1 h-10 q-1 0 -1 -1z" fill="#f27c3a"/><rect x="4" y="4" width="4" height="3.5" fill="#fff" opacity="0.5"/></svg><div class="t" style="left:36.5px;top:391.7px;font-size:9px;line-height:11px;color:#444">图片</div><svg class="abs" style="left:18px;top:412.79999999999995px" width="12" height="10" viewBox="0 0 12 10"><path d="M0 1 q0 -1 1 -1 h3.5 l1.2 1.2 h5.3 q1 0 1 1 v6.8 q0 1 -1 1 h-10 q-1 0 -1 -1z" fill="#f5a742"/><rect x="4" y="4" width="4" height="3.5" fill="#fff" opacity="0.5"/></svg><div class="t" style="left:36.5px;top:412.99999999999994px;font-size:9px;line-height:11px;color:#444">视频</div><svg class="abs" style="left:18px;top:434.1px" width="12" height="10" viewBox="0 0 12 10"><path d="M0 1 q0 -1 1 -1 h3.5 l1.2 1.2 h5.3 q1 0 1 1 v6.8 q0 1 -1 1 h-10 q-1 0 -1 -1z" fill="#8f58e6"/><rect x="4" y="4" width="4" height="3.5" fill="#fff" opacity="0.5"/></svg><div class="t" style="left:36.5px;top:434.3px;font-size:9px;line-height:11px;color:#444">文档</div><svg class="abs" style="left:18px;top:455.4px" width="12" height="10" viewBox="0 0 12 10"><path d="M0 1 q0 -1 1 -1 h3.5 l1.2 1.2 h5.3 q1 0 1 1 v6.8 q0 1 -1 1 h-10 q-1 0 -1 -1z" fill="#ea4a6e"/><rect x="4" y="4" width="4" height="3.5" fill="#fff" opacity="0.5"/></svg><div class="t" style="left:36.5px;top:455.59999999999997px;font-size:9px;line-height:11px;color:#444">音频</div><svg class="abs" style="left:18px;top:476.70000000000005px" width="12" height="10" viewBox="0 0 12 10"><path d="M0 1 q0 -1 1 -1 h3.5 l1.2 1.2 h5.3 q1 0 1 1 v6.8 q0 1 -1 1 h-10 q-1 0 -1 -1z" fill="#33b8e8"/><rect x="4" y="4" width="4" height="3.5" fill="#fff" opacity="0.5"/></svg><div class="t" style="left:36.5px;top:476.90000000000003px;font-size:9px;line-height:11px;color:#444">电子书</div><svg class="abs" style="left:18px;top:498.0px" width="12" height="10" viewBox="0 0 12 10"><path d="M0 1 q0 -1 1 -1 h3.5 l1.2 1.2 h5.3 q1 0 1 1 v6.8 q0 1 -1 1 h-10 q-1 0 -1 -1z" fill="#7a7a7a"/><rect x="4" y="4" width="4" height="3.5" fill="#fff" opacity="0.5"/></svg><div class="t" style="left:36.5px;top:498.2px;font-size:9px;line-height:11px;color:#444">压缩包</div><svg class="abs" style="left:18px;top:519.3px" width="12" height="10" viewBox="0 0 12 10"><path d="M0 1 q0 -1 1 -1 h3.5 l1.2 1.2 h5.3 q1 0 1 1 v6.8 q0 1 -1 1 h-10 q-1 0 -1 -1z" fill="#d863d6"/><rect x="4" y="4" width="4" height="3.5" fill="#fff" opacity="0.5"/></svg><div class="t" style="left:36.5px;top:519.5px;font-size:9px;line-height:11px;color:#444">安装包</div><svg class="abs" style="left:157px;top:46px" width="43" height="36" viewBox="0 0 43 36"><path d="M0 4 q0 -4 4 -4 h9 q2 0 3.5 1.5 l2 2 h20.5 q4 0 4 4 v3 h-43z" fill="#3d8fd0"/><rect x="0" y="5.5" width="43" height="30" rx="4" fill="#5bbcf3"/></svg><div class="fitem" style="left:138.5px;top:89px">thumb</div><div class="abs" style="left:258.5px;top:47.69999999999999px"><svg width="28" height="33" viewBox="0 0 28 33"><path d="M1.5 0 h17 l9.5 9 v22.5 q0 1.5 -1.5 1.5 h-25 q-1.5 0 -1.5 -1.5 v-30 q0 -1.5 1.5 -1.5z" fill="#79a6f6"/><path d="M18.5 0 v7.5 q0 1.5 1.5 1.5 h8z" fill="#a9c6fa"/><path d="M7 11.5 h14.5 M7 15.5 h14.5 M7 19.5 h10.5" stroke="#fff" stroke-width="2"/></svg></div><div class="fitem" style="left:232.5px;top:89px">Hunter_01.epub</div><div class="abs" style="left:352.5px;top:47.69999999999999px"><svg width="28" height="33" viewBox="0 0 28 33"><path d="M1.5 0 h17 l9.5 9 v22.5 q0 1.5 -1.5 1.5 h-25 q-1.5 0 -1.5 -1.5 v-30 q0 -1.5 1.5 -1.5z" fill="#79a6f6"/><path d="M18.5 0 v7.5 q0 1.5 1.5 1.5 h8z" fill="#a9c6fa"/><path d="M7 11.5 h14.5 M7 15.5 h14.5 M7 19.5 h10.5" stroke="#fff" stroke-width="2"/></svg></div><div class="fitem" style="left:326.5px;top:89px">野生BOSS 篇01<br>卷.epub</div><div class="abs" style="left:446.5px;top:47.69999999999999px"><svg width="28" height="33" viewBox="0 0 28 33"><path d="M1.5 0 h17 l9.5 9 v22.5 q0 1.5 -1.5 1.5 h-25 q-1.5 0 -1.5 -1.5 v-30 q0 -1.5 1.5 -1.5z" fill="#79a6f6"/><path d="M18.5 0 v7.5 q0 1.5 1.5 1.5 h8z" fill="#a9c6fa"/><path d="M7 11.5 h14.5 M7 15.5 h14.5 M7 19.5 h10.5" stroke="#fff" stroke-width="2"/></svg></div><div class="fitem" style="left:420.5px;top:89px">野生BOSS 篇02<br>卷.epub</div><div class="abs" style="left:540.5px;top:47.69999999999999px"><svg width="28" height="33" viewBox="0 0 28 33"><path d="M1.5 0 h17 l9.5 9 v22.5 q0 1.5 -1.5 1.5 h-25 q-1.5 0 -1.5 -1.5 v-30 q0 -1.5 1.5 -1.5z" fill="#79a6f6"/><path d="M18.5 0 v7.5 q0 1.5 1.5 1.5 h8z" fill="#a9c6fa"/><path d="M7 11.5 h14.5 M7 15.5 h14.5 M7 19.5 h10.5" stroke="#fff" stroke-width="2"/></svg></div><div class="fitem" style="left:514.5px;top:89px">野生BOSS 篇03<br>卷.epub</div><div class="abs" style="left:634.5px;top:47.69999999999999px"><svg width="28" height="33" viewBox="0 0 28 33"><path d="M1.5 0 h17 l9.5 9 v22.5 q0 1.5 -1.5 1.5 h-25 q-1.5 0 -1.5 -1.5 v-30 q0 -1.5 1.5 -1.5z" fill="#79a6f6"/><path d="M18.5 0 v7.5 q0 1.5 1.5 1.5 h8z" fill="#a9c6fa"/><path d="M7 11.5 h14.5 M7 15.5 h14.5 M7 19.5 h10.5" stroke="#fff" stroke-width="2"/></svg></div><div class="fitem" style="left:608.5px;top:89px">野生BOSS 篇04<br>卷.epub</div><div class="abs" style="left:235px;top:38.69999999999999px;width:76.5px;height:72.2px;border:3px solid #e5301c"></div><div class="abs" style="left:131px;top:506px;width:659px;height:1px;background:#ececec"></div><div class="t" style="left:750px;top:513px;font-size:7.4px;line-height:9px;color:#555">共6个文件</div></div>
<div class="abs" style="left:460px;top:671px;width:203px;height:36px;border-radius:8px;background:#8f8b89"></div><div class="abs" style="left:670.5px;top:671px;width:135.5px;height:36px;border-radius:8px;background:#8f8b89"></div><svg class="abs" style="left:465.8px;top:676px" width="26" height="26" viewBox="0 0 26 26"><rect width="26" height="26" rx="6" fill="#fff"/><circle cx="13" cy="13" r="10" fill="#2e9af0"/><rect x="8.5" y="8.5" width="3.8" height="3.8" rx=".6" fill="#fff"/><rect x="13.7" y="8.5" width="3.8" height="3.8" rx=".6" fill="#fff"/><rect x="8.5" y="13.7" width="3.8" height="3.8" rx=".6" fill="#fff"/><rect x="13.7" y="13.7" width="3.8" height="3.8" rx=".6" fill="#fff"/></svg><svg class="abs" style="left:499.0px;top:676px" width="26" height="26" viewBox="0 0 26 26"><rect width="26" height="26" rx="6" fill="#fff"/><path d="M6.2 6.5 h13.6 l-1.4 13.5 q-0.2 1.5 -1.7 1.5 h-7.4 q-1.5 0 -1.7 -1.5z" fill="#eaf5fa" stroke="#c8dde8" stroke-width=".7"/><path d="M6.5 6.5 q0 -1.2 1.2 -1.2 M19.5 6.5 q0 -1.2 -1.2 -1.2" stroke="#b8ccd8" stroke-width=".7" fill="none"/><g fill="none" stroke="#2a9a8a" stroke-width="1.3"><path d="M11.6 10.8 L13 9.4 L14.4 10.8"/><path d="M15.6 12.6 L16.4 14.6 L14.8 15.8"/><path d="M11.2 15.8 L9.6 14.6 L10.4 12.6"/><path d="M13 9.6 L15.8 13.6 M15 15.8 H11 M10.2 13.4 L12.2 10.4" stroke-width="1.1"/></g></svg><svg class="abs" style="left:532.2px;top:676px" width="26" height="26" viewBox="0 0 26 26"><rect width="26" height="26" rx="6" fill="#fff"/><path d="M9.3 8.3 L19.6 6.2 V9.4 L9.3 11.5z" fill="#f05a78"/><path d="M9.3 8.3 V19.3 M19.6 6.2 V17.3" stroke="#ec4868" stroke-width="1.6"/><circle cx="7.4" cy="19.4" r="2.5" fill="#e83a5a"/><circle cx="17.7" cy="17.4" r="2.5" fill="#e83a5a"/></svg><svg class="abs" style="left:565.4px;top:676px" width="26" height="26" viewBox="0 0 26 26"><rect width="26" height="26" rx="6" fill="#fff"/><rect x="5" y="10" width="16" height="11" rx="1.5" fill="#3a3a3a"/><path d="M5 6 l15 -1.5 l.8 4 l-15.8 1.5z" fill="#3a3a3a"/><path d="M8 6 l2 2 M12 5.6 l2 2 M16 5.2 l2 2" stroke="#fff" stroke-width="1"/><path d="M11.5 13 v6 l5 -3z" fill="#fff"/></svg><svg class="abs" style="left:598.6px;top:676px" width="26" height="26" viewBox="0 0 26 26"><rect width="26" height="26" rx="6" fill="#fff"/><g transform="translate(13 13) scale(0.68)"><ellipse cx="2.6" cy="-7.2" rx="5.6" ry="7.6" fill="#f8a43a" opacity="0.93" transform="rotate(0)"/><ellipse cx="2.6" cy="-7.2" rx="5.6" ry="7.6" fill="#c4d84a" opacity="0.93" transform="rotate(45)"/><ellipse cx="2.6" cy="-7.2" rx="5.6" ry="7.6" fill="#5cc266" opacity="0.93" transform="rotate(90)"/><ellipse cx="2.6" cy="-7.2" rx="5.6" ry="7.6" fill="#2cc4d0" opacity="0.93" transform="rotate(135)"/><ellipse cx="2.6" cy="-7.2" rx="5.6" ry="7.6" fill="#2a8cf0" opacity="0.93" transform="rotate(180)"/><ellipse cx="2.6" cy="-7.2" rx="5.6" ry="7.6" fill="#8a58dc" opacity="0.93" transform="rotate(225)"/><ellipse cx="2.6" cy="-7.2" rx="5.6" ry="7.6" fill="#ee4f8e" opacity="0.93" transform="rotate(270)"/><ellipse cx="2.6" cy="-7.2" rx="5.6" ry="7.6" fill="#f25a5a" opacity="0.93" transform="rotate(315)"/></g></svg><svg class="abs" style="left:631.8px;top:676px" width="26" height="26" viewBox="0 0 26 26"><rect width="26" height="26" rx="6" fill="#fff"/><path d="M4 7 h7 l2 2 h9 v11 h-18z" fill="#10a8f0"/></svg><div class="abs" style="left:675.8px;top:680.5px;width:26.5px;height:17.5px;background:#fdfdfd"></div><svg class="abs" style="left:676.3px;top:676.5px" width="10" height="10" viewBox="0 0 10 10"><rect width="10" height="10" rx="2.2" fill="#6a6a6a"/><circle cx="5" cy="5" r="3.2" fill="none" stroke="#e8e8e8" stroke-width="1"/><path d="M5 1.9 V5.9 M1.9 6.7 L5 5.8 L8.1 6.7" stroke="#e8e8e8" stroke-width="1.1" fill="none"/></svg><div class="abs" style="left:708.8px;top:680.5px;width:26.5px;height:17.5px;background:#fdfdfd"></div><svg class="abs" style="left:709.3px;top:676.5px" width="10" height="10" viewBox="0 0 10 10"><rect width="10" height="10" rx="2.2" fill="#6a6a6a"/><circle cx="5" cy="5" r="3.2" fill="none" stroke="#e8e8e8" stroke-width="1"/><path d="M5 1.9 V5.9 M1.9 6.7 L5 5.8 L8.1 6.7" stroke="#e8e8e8" stroke-width="1.1" fill="none"/></svg><div class="abs" style="left:741.8px;top:680.5px;width:26.5px;height:17.5px;background:#fdfdfd"></div><svg class="abs" style="left:742.3px;top:676.5px" width="10" height="10" viewBox="0 0 10 10"><rect width="10" height="10" rx="2.2" fill="#6a6a6a"/><circle cx="5" cy="5" r="3.2" fill="none" stroke="#e8e8e8" stroke-width="1"/><path d="M5 1.9 V5.9 M1.9 6.7 L5 5.8 L8.1 6.7" stroke="#e8e8e8" stroke-width="1.1" fill="none"/></svg><div class="abs" style="left:774.8px;top:680.5px;width:26.5px;height:17.5px;background:#fdfdfd"></div><svg class="abs" style="left:775.3px;top:676.5px" width="10" height="10" viewBox="0 0 10 10"><rect width="10" height="10" rx="2.2" fill="#6a6a6a"/><circle cx="5" cy="5" r="3.2" fill="none" stroke="#e8e8e8" stroke-width="1"/><path d="M5 1.9 V5.9 M1.9 6.7 L5 5.8 L8.1 6.7" stroke="#e8e8e8" stroke-width="1.1" fill="none"/></svg>
</body></html>
